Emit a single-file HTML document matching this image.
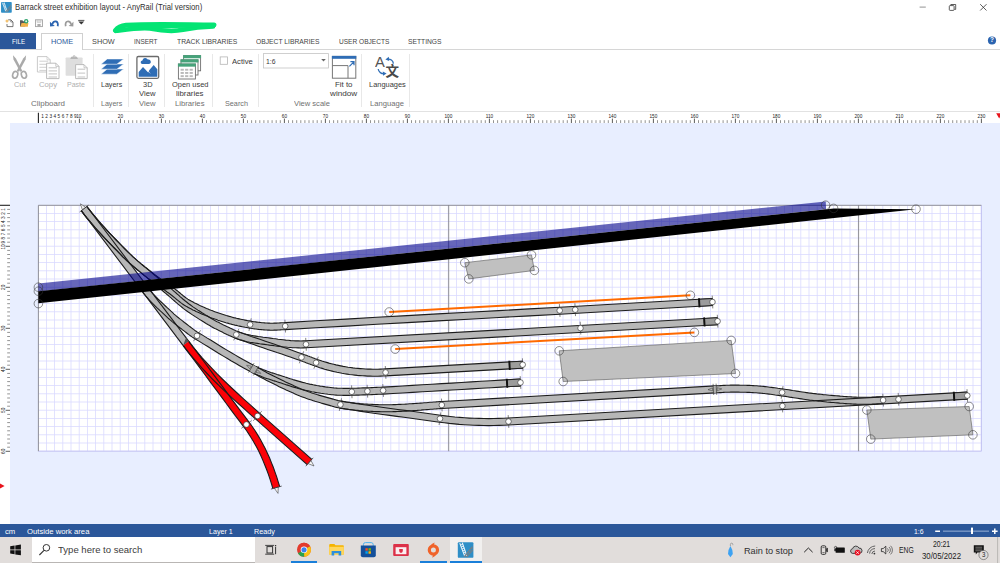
<!DOCTYPE html>
<html lang="en"><head><meta charset="utf-8"><title>Barrack street exhibition layout - AnyRail (Trial version)</title>
<style>
html,body{margin:0;padding:0}
body{width:1000px;height:563px;overflow:hidden;position:relative;background:#fff;font-family:"Liberation Sans",sans-serif;color:#333}
.t{position:absolute;white-space:nowrap;transform-origin:0 0;line-height:1;display:block}
.abs{position:absolute}
svg{position:absolute;left:0;top:0;overflow:visible}
#titlebar{position:absolute;left:0;top:0;width:1000px;height:32px;background:#fff}
#tabs{position:absolute;left:0;top:32px;width:1000px;height:17px;background:#fff;border-bottom:1px solid #d6d6d6}
#file{position:absolute;left:0;top:0.5px;width:36px;height:16.5px;background:#2b579a}
#hometab{position:absolute;left:41px;top:0.5px;width:40px;height:17px;background:#fff;border:1px solid #d0d0d0;border-bottom:1px solid #fff;box-sizing:content-box}
#ribbon{position:absolute;left:0;top:50px;width:1000px;height:61px;background:#fff;border-bottom:1px solid #e2e2e2}
.sep{position:absolute;top:54px;width:1px;height:53px;background:#e8e8e8}
#workspace{position:absolute;left:0;top:112px;width:1000px;height:412px;background:#fff}
#outside{position:absolute;left:10px;top:123px;width:990px;height:401px;background:#e8eeff}
#status{position:absolute;left:0;top:524px;width:1000px;height:13px;background:#2b579a}
#taskbar{position:absolute;left:0;top:537px;width:1000px;height:26px;background:#e1dddb}
#search{position:absolute;left:32px;top:0;width:223px;height:25px;background:#fff;border-bottom:1px solid #b9b6b4}
#active{position:absolute;left:450px;top:0;width:32px;height:26px;background:#f1f0ef}
.ul{position:absolute;top:24.3px;height:1.7px;background:#1a7fd9}
</style></head><body>
<div id="titlebar"></div>
<div id="tabs"><div id="file"></div><div id="hometab"></div></div>
<div id="ribbon"></div>
<div class="sep" style="left:92.5px"></div><div class="sep" style="left:128.3px"></div><div class="sep" style="left:164.2px"></div><div class="sep" style="left:212.4px"></div><div class="sep" style="left:258.3px"></div><div class="sep" style="left:361.3px"></div><div class="sep" style="left:408.8px"></div>
<div id="workspace"></div><div id="outside"></div>
<div id="status"></div>
<div id="taskbar"><div id="search"></div><div id="active"></div><div class="ul" style="left:291.3px;width:26.19999999999999px"></div><div class="ul" style="left:420px;width:27.19999999999999px"></div><div class="ul" style="left:450px;width:32px"></div></div>
<svg width="1000" height="563" viewBox="0 0 1000 563"><path d="M38.40,112.8 V123" stroke="#222" stroke-width="1.1"/><path d="M42.50,120.2 V123" stroke="#666" stroke-width="0.7"/><path d="M46.60,120.2 V123" stroke="#666" stroke-width="0.7"/><path d="M50.70,120.2 V123" stroke="#666" stroke-width="0.7"/><path d="M54.80,120.2 V123" stroke="#666" stroke-width="0.7"/><path d="M58.90,120.2 V123" stroke="#666" stroke-width="0.7"/><path d="M63.00,120.2 V123" stroke="#666" stroke-width="0.7"/><path d="M67.10,120.2 V123" stroke="#666" stroke-width="0.7"/><path d="M71.20,120.2 V123" stroke="#666" stroke-width="0.7"/><path d="M75.30,120.2 V123" stroke="#666" stroke-width="0.7"/><path d="M79.40,118.6 V123" stroke="#333" stroke-width="0.8"/><path d="M83.50,120.2 V123" stroke="#666" stroke-width="0.7"/><path d="M87.60,120.2 V123" stroke="#666" stroke-width="0.7"/><path d="M91.70,120.2 V123" stroke="#666" stroke-width="0.7"/><path d="M95.80,120.2 V123" stroke="#666" stroke-width="0.7"/><path d="M99.90,120.2 V123" stroke="#666" stroke-width="0.7"/><path d="M104.00,120.2 V123" stroke="#666" stroke-width="0.7"/><path d="M108.10,120.2 V123" stroke="#666" stroke-width="0.7"/><path d="M112.20,120.2 V123" stroke="#666" stroke-width="0.7"/><path d="M116.30,120.2 V123" stroke="#666" stroke-width="0.7"/><path d="M120.40,118.6 V123" stroke="#333" stroke-width="0.8"/><path d="M124.50,120.2 V123" stroke="#666" stroke-width="0.7"/><path d="M128.60,120.2 V123" stroke="#666" stroke-width="0.7"/><path d="M132.70,120.2 V123" stroke="#666" stroke-width="0.7"/><path d="M136.80,120.2 V123" stroke="#666" stroke-width="0.7"/><path d="M140.90,120.2 V123" stroke="#666" stroke-width="0.7"/><path d="M145.00,120.2 V123" stroke="#666" stroke-width="0.7"/><path d="M149.10,120.2 V123" stroke="#666" stroke-width="0.7"/><path d="M153.20,120.2 V123" stroke="#666" stroke-width="0.7"/><path d="M157.30,120.2 V123" stroke="#666" stroke-width="0.7"/><path d="M161.40,118.6 V123" stroke="#333" stroke-width="0.8"/><path d="M165.50,120.2 V123" stroke="#666" stroke-width="0.7"/><path d="M169.60,120.2 V123" stroke="#666" stroke-width="0.7"/><path d="M173.70,120.2 V123" stroke="#666" stroke-width="0.7"/><path d="M177.80,120.2 V123" stroke="#666" stroke-width="0.7"/><path d="M181.90,120.2 V123" stroke="#666" stroke-width="0.7"/><path d="M186.00,120.2 V123" stroke="#666" stroke-width="0.7"/><path d="M190.10,120.2 V123" stroke="#666" stroke-width="0.7"/><path d="M194.20,120.2 V123" stroke="#666" stroke-width="0.7"/><path d="M198.30,120.2 V123" stroke="#666" stroke-width="0.7"/><path d="M202.40,118.6 V123" stroke="#333" stroke-width="0.8"/><path d="M206.50,120.2 V123" stroke="#666" stroke-width="0.7"/><path d="M210.60,120.2 V123" stroke="#666" stroke-width="0.7"/><path d="M214.70,120.2 V123" stroke="#666" stroke-width="0.7"/><path d="M218.80,120.2 V123" stroke="#666" stroke-width="0.7"/><path d="M222.90,120.2 V123" stroke="#666" stroke-width="0.7"/><path d="M227.00,120.2 V123" stroke="#666" stroke-width="0.7"/><path d="M231.10,120.2 V123" stroke="#666" stroke-width="0.7"/><path d="M235.20,120.2 V123" stroke="#666" stroke-width="0.7"/><path d="M239.30,120.2 V123" stroke="#666" stroke-width="0.7"/><path d="M243.40,118.6 V123" stroke="#333" stroke-width="0.8"/><path d="M247.50,120.2 V123" stroke="#666" stroke-width="0.7"/><path d="M251.60,120.2 V123" stroke="#666" stroke-width="0.7"/><path d="M255.70,120.2 V123" stroke="#666" stroke-width="0.7"/><path d="M259.80,120.2 V123" stroke="#666" stroke-width="0.7"/><path d="M263.90,120.2 V123" stroke="#666" stroke-width="0.7"/><path d="M268.00,120.2 V123" stroke="#666" stroke-width="0.7"/><path d="M272.10,120.2 V123" stroke="#666" stroke-width="0.7"/><path d="M276.20,120.2 V123" stroke="#666" stroke-width="0.7"/><path d="M280.30,120.2 V123" stroke="#666" stroke-width="0.7"/><path d="M284.40,118.6 V123" stroke="#333" stroke-width="0.8"/><path d="M288.50,120.2 V123" stroke="#666" stroke-width="0.7"/><path d="M292.60,120.2 V123" stroke="#666" stroke-width="0.7"/><path d="M296.70,120.2 V123" stroke="#666" stroke-width="0.7"/><path d="M300.80,120.2 V123" stroke="#666" stroke-width="0.7"/><path d="M304.90,120.2 V123" stroke="#666" stroke-width="0.7"/><path d="M309.00,120.2 V123" stroke="#666" stroke-width="0.7"/><path d="M313.10,120.2 V123" stroke="#666" stroke-width="0.7"/><path d="M317.20,120.2 V123" stroke="#666" stroke-width="0.7"/><path d="M321.30,120.2 V123" stroke="#666" stroke-width="0.7"/><path d="M325.40,118.6 V123" stroke="#333" stroke-width="0.8"/><path d="M329.50,120.2 V123" stroke="#666" stroke-width="0.7"/><path d="M333.60,120.2 V123" stroke="#666" stroke-width="0.7"/><path d="M337.70,120.2 V123" stroke="#666" stroke-width="0.7"/><path d="M341.80,120.2 V123" stroke="#666" stroke-width="0.7"/><path d="M345.90,120.2 V123" stroke="#666" stroke-width="0.7"/><path d="M350.00,120.2 V123" stroke="#666" stroke-width="0.7"/><path d="M354.10,120.2 V123" stroke="#666" stroke-width="0.7"/><path d="M358.20,120.2 V123" stroke="#666" stroke-width="0.7"/><path d="M362.30,120.2 V123" stroke="#666" stroke-width="0.7"/><path d="M366.40,118.6 V123" stroke="#333" stroke-width="0.8"/><path d="M370.50,120.2 V123" stroke="#666" stroke-width="0.7"/><path d="M374.60,120.2 V123" stroke="#666" stroke-width="0.7"/><path d="M378.70,120.2 V123" stroke="#666" stroke-width="0.7"/><path d="M382.80,120.2 V123" stroke="#666" stroke-width="0.7"/><path d="M386.90,120.2 V123" stroke="#666" stroke-width="0.7"/><path d="M391.00,120.2 V123" stroke="#666" stroke-width="0.7"/><path d="M395.10,120.2 V123" stroke="#666" stroke-width="0.7"/><path d="M399.20,120.2 V123" stroke="#666" stroke-width="0.7"/><path d="M403.30,120.2 V123" stroke="#666" stroke-width="0.7"/><path d="M407.40,118.6 V123" stroke="#333" stroke-width="0.8"/><path d="M411.50,120.2 V123" stroke="#666" stroke-width="0.7"/><path d="M415.60,120.2 V123" stroke="#666" stroke-width="0.7"/><path d="M419.70,120.2 V123" stroke="#666" stroke-width="0.7"/><path d="M423.80,120.2 V123" stroke="#666" stroke-width="0.7"/><path d="M427.90,120.2 V123" stroke="#666" stroke-width="0.7"/><path d="M432.00,120.2 V123" stroke="#666" stroke-width="0.7"/><path d="M436.10,120.2 V123" stroke="#666" stroke-width="0.7"/><path d="M440.20,120.2 V123" stroke="#666" stroke-width="0.7"/><path d="M444.30,120.2 V123" stroke="#666" stroke-width="0.7"/><path d="M448.40,118.6 V123" stroke="#333" stroke-width="0.8"/><path d="M452.50,120.2 V123" stroke="#666" stroke-width="0.7"/><path d="M456.60,120.2 V123" stroke="#666" stroke-width="0.7"/><path d="M460.70,120.2 V123" stroke="#666" stroke-width="0.7"/><path d="M464.80,120.2 V123" stroke="#666" stroke-width="0.7"/><path d="M468.90,120.2 V123" stroke="#666" stroke-width="0.7"/><path d="M473.00,120.2 V123" stroke="#666" stroke-width="0.7"/><path d="M477.10,120.2 V123" stroke="#666" stroke-width="0.7"/><path d="M481.20,120.2 V123" stroke="#666" stroke-width="0.7"/><path d="M485.30,120.2 V123" stroke="#666" stroke-width="0.7"/><path d="M489.40,118.6 V123" stroke="#333" stroke-width="0.8"/><path d="M493.50,120.2 V123" stroke="#666" stroke-width="0.7"/><path d="M497.60,120.2 V123" stroke="#666" stroke-width="0.7"/><path d="M501.70,120.2 V123" stroke="#666" stroke-width="0.7"/><path d="M505.80,120.2 V123" stroke="#666" stroke-width="0.7"/><path d="M509.90,120.2 V123" stroke="#666" stroke-width="0.7"/><path d="M514.00,120.2 V123" stroke="#666" stroke-width="0.7"/><path d="M518.10,120.2 V123" stroke="#666" stroke-width="0.7"/><path d="M522.20,120.2 V123" stroke="#666" stroke-width="0.7"/><path d="M526.30,120.2 V123" stroke="#666" stroke-width="0.7"/><path d="M530.40,118.6 V123" stroke="#333" stroke-width="0.8"/><path d="M534.50,120.2 V123" stroke="#666" stroke-width="0.7"/><path d="M538.60,120.2 V123" stroke="#666" stroke-width="0.7"/><path d="M542.70,120.2 V123" stroke="#666" stroke-width="0.7"/><path d="M546.80,120.2 V123" stroke="#666" stroke-width="0.7"/><path d="M550.90,120.2 V123" stroke="#666" stroke-width="0.7"/><path d="M555.00,120.2 V123" stroke="#666" stroke-width="0.7"/><path d="M559.10,120.2 V123" stroke="#666" stroke-width="0.7"/><path d="M563.20,120.2 V123" stroke="#666" stroke-width="0.7"/><path d="M567.30,120.2 V123" stroke="#666" stroke-width="0.7"/><path d="M571.40,118.6 V123" stroke="#333" stroke-width="0.8"/><path d="M575.50,120.2 V123" stroke="#666" stroke-width="0.7"/><path d="M579.60,120.2 V123" stroke="#666" stroke-width="0.7"/><path d="M583.70,120.2 V123" stroke="#666" stroke-width="0.7"/><path d="M587.80,120.2 V123" stroke="#666" stroke-width="0.7"/><path d="M591.90,120.2 V123" stroke="#666" stroke-width="0.7"/><path d="M596.00,120.2 V123" stroke="#666" stroke-width="0.7"/><path d="M600.10,120.2 V123" stroke="#666" stroke-width="0.7"/><path d="M604.20,120.2 V123" stroke="#666" stroke-width="0.7"/><path d="M608.30,120.2 V123" stroke="#666" stroke-width="0.7"/><path d="M612.40,118.6 V123" stroke="#333" stroke-width="0.8"/><path d="M616.50,120.2 V123" stroke="#666" stroke-width="0.7"/><path d="M620.60,120.2 V123" stroke="#666" stroke-width="0.7"/><path d="M624.70,120.2 V123" stroke="#666" stroke-width="0.7"/><path d="M628.80,120.2 V123" stroke="#666" stroke-width="0.7"/><path d="M632.90,120.2 V123" stroke="#666" stroke-width="0.7"/><path d="M637.00,120.2 V123" stroke="#666" stroke-width="0.7"/><path d="M641.10,120.2 V123" stroke="#666" stroke-width="0.7"/><path d="M645.20,120.2 V123" stroke="#666" stroke-width="0.7"/><path d="M649.30,120.2 V123" stroke="#666" stroke-width="0.7"/><path d="M653.40,118.6 V123" stroke="#333" stroke-width="0.8"/><path d="M657.50,120.2 V123" stroke="#666" stroke-width="0.7"/><path d="M661.60,120.2 V123" stroke="#666" stroke-width="0.7"/><path d="M665.70,120.2 V123" stroke="#666" stroke-width="0.7"/><path d="M669.80,120.2 V123" stroke="#666" stroke-width="0.7"/><path d="M673.90,120.2 V123" stroke="#666" stroke-width="0.7"/><path d="M678.00,120.2 V123" stroke="#666" stroke-width="0.7"/><path d="M682.10,120.2 V123" stroke="#666" stroke-width="0.7"/><path d="M686.20,120.2 V123" stroke="#666" stroke-width="0.7"/><path d="M690.30,120.2 V123" stroke="#666" stroke-width="0.7"/><path d="M694.40,118.6 V123" stroke="#333" stroke-width="0.8"/><path d="M698.50,120.2 V123" stroke="#666" stroke-width="0.7"/><path d="M702.60,120.2 V123" stroke="#666" stroke-width="0.7"/><path d="M706.70,120.2 V123" stroke="#666" stroke-width="0.7"/><path d="M710.80,120.2 V123" stroke="#666" stroke-width="0.7"/><path d="M714.90,120.2 V123" stroke="#666" stroke-width="0.7"/><path d="M719.00,120.2 V123" stroke="#666" stroke-width="0.7"/><path d="M723.10,120.2 V123" stroke="#666" stroke-width="0.7"/><path d="M727.20,120.2 V123" stroke="#666" stroke-width="0.7"/><path d="M731.30,120.2 V123" stroke="#666" stroke-width="0.7"/><path d="M735.40,118.6 V123" stroke="#333" stroke-width="0.8"/><path d="M739.50,120.2 V123" stroke="#666" stroke-width="0.7"/><path d="M743.60,120.2 V123" stroke="#666" stroke-width="0.7"/><path d="M747.70,120.2 V123" stroke="#666" stroke-width="0.7"/><path d="M751.80,120.2 V123" stroke="#666" stroke-width="0.7"/><path d="M755.90,120.2 V123" stroke="#666" stroke-width="0.7"/><path d="M760.00,120.2 V123" stroke="#666" stroke-width="0.7"/><path d="M764.10,120.2 V123" stroke="#666" stroke-width="0.7"/><path d="M768.20,120.2 V123" stroke="#666" stroke-width="0.7"/><path d="M772.30,120.2 V123" stroke="#666" stroke-width="0.7"/><path d="M776.40,118.6 V123" stroke="#333" stroke-width="0.8"/><path d="M780.50,120.2 V123" stroke="#666" stroke-width="0.7"/><path d="M784.60,120.2 V123" stroke="#666" stroke-width="0.7"/><path d="M788.70,120.2 V123" stroke="#666" stroke-width="0.7"/><path d="M792.80,120.2 V123" stroke="#666" stroke-width="0.7"/><path d="M796.90,120.2 V123" stroke="#666" stroke-width="0.7"/><path d="M801.00,120.2 V123" stroke="#666" stroke-width="0.7"/><path d="M805.10,120.2 V123" stroke="#666" stroke-width="0.7"/><path d="M809.20,120.2 V123" stroke="#666" stroke-width="0.7"/><path d="M813.30,120.2 V123" stroke="#666" stroke-width="0.7"/><path d="M817.40,118.6 V123" stroke="#333" stroke-width="0.8"/><path d="M821.50,120.2 V123" stroke="#666" stroke-width="0.7"/><path d="M825.60,120.2 V123" stroke="#666" stroke-width="0.7"/><path d="M829.70,120.2 V123" stroke="#666" stroke-width="0.7"/><path d="M833.80,120.2 V123" stroke="#666" stroke-width="0.7"/><path d="M837.90,120.2 V123" stroke="#666" stroke-width="0.7"/><path d="M842.00,120.2 V123" stroke="#666" stroke-width="0.7"/><path d="M846.10,120.2 V123" stroke="#666" stroke-width="0.7"/><path d="M850.20,120.2 V123" stroke="#666" stroke-width="0.7"/><path d="M854.30,120.2 V123" stroke="#666" stroke-width="0.7"/><path d="M858.40,118.6 V123" stroke="#333" stroke-width="0.8"/><path d="M862.50,120.2 V123" stroke="#666" stroke-width="0.7"/><path d="M866.60,120.2 V123" stroke="#666" stroke-width="0.7"/><path d="M870.70,120.2 V123" stroke="#666" stroke-width="0.7"/><path d="M874.80,120.2 V123" stroke="#666" stroke-width="0.7"/><path d="M878.90,120.2 V123" stroke="#666" stroke-width="0.7"/><path d="M883.00,120.2 V123" stroke="#666" stroke-width="0.7"/><path d="M887.10,120.2 V123" stroke="#666" stroke-width="0.7"/><path d="M891.20,120.2 V123" stroke="#666" stroke-width="0.7"/><path d="M895.30,120.2 V123" stroke="#666" stroke-width="0.7"/><path d="M899.40,118.6 V123" stroke="#333" stroke-width="0.8"/><path d="M903.50,120.2 V123" stroke="#666" stroke-width="0.7"/><path d="M907.60,120.2 V123" stroke="#666" stroke-width="0.7"/><path d="M911.70,120.2 V123" stroke="#666" stroke-width="0.7"/><path d="M915.80,120.2 V123" stroke="#666" stroke-width="0.7"/><path d="M919.90,120.2 V123" stroke="#666" stroke-width="0.7"/><path d="M924.00,120.2 V123" stroke="#666" stroke-width="0.7"/><path d="M928.10,120.2 V123" stroke="#666" stroke-width="0.7"/><path d="M932.20,120.2 V123" stroke="#666" stroke-width="0.7"/><path d="M936.30,120.2 V123" stroke="#666" stroke-width="0.7"/><path d="M940.40,118.6 V123" stroke="#333" stroke-width="0.8"/><path d="M944.50,120.2 V123" stroke="#666" stroke-width="0.7"/><path d="M948.60,120.2 V123" stroke="#666" stroke-width="0.7"/><path d="M952.70,120.2 V123" stroke="#666" stroke-width="0.7"/><path d="M956.80,120.2 V123" stroke="#666" stroke-width="0.7"/><path d="M960.90,120.2 V123" stroke="#666" stroke-width="0.7"/><path d="M965.00,120.2 V123" stroke="#666" stroke-width="0.7"/><path d="M969.10,120.2 V123" stroke="#666" stroke-width="0.7"/><path d="M973.20,120.2 V123" stroke="#666" stroke-width="0.7"/><path d="M977.30,120.2 V123" stroke="#666" stroke-width="0.7"/><path d="M981.40,118.6 V123" stroke="#333" stroke-width="0.8"/><path d="M0,205.30 H10" stroke="#222" stroke-width="1.1"/><path d="M7.2,209.40 H10" stroke="#666" stroke-width="0.7"/><path d="M7.2,213.50 H10" stroke="#666" stroke-width="0.7"/><path d="M7.2,217.60 H10" stroke="#666" stroke-width="0.7"/><path d="M7.2,221.70 H10" stroke="#666" stroke-width="0.7"/><path d="M7.2,225.80 H10" stroke="#666" stroke-width="0.7"/><path d="M7.2,229.90 H10" stroke="#666" stroke-width="0.7"/><path d="M7.2,234.00 H10" stroke="#666" stroke-width="0.7"/><path d="M7.2,238.10 H10" stroke="#666" stroke-width="0.7"/><path d="M7.2,242.20 H10" stroke="#666" stroke-width="0.7"/><path d="M5.6,246.30 H10" stroke="#333" stroke-width="0.8"/><path d="M7.2,250.40 H10" stroke="#666" stroke-width="0.7"/><path d="M7.2,254.50 H10" stroke="#666" stroke-width="0.7"/><path d="M7.2,258.60 H10" stroke="#666" stroke-width="0.7"/><path d="M7.2,262.70 H10" stroke="#666" stroke-width="0.7"/><path d="M7.2,266.80 H10" stroke="#666" stroke-width="0.7"/><path d="M7.2,270.90 H10" stroke="#666" stroke-width="0.7"/><path d="M7.2,275.00 H10" stroke="#666" stroke-width="0.7"/><path d="M7.2,279.10 H10" stroke="#666" stroke-width="0.7"/><path d="M7.2,283.20 H10" stroke="#666" stroke-width="0.7"/><path d="M5.6,287.30 H10" stroke="#333" stroke-width="0.8"/><path d="M7.2,291.40 H10" stroke="#666" stroke-width="0.7"/><path d="M7.2,295.50 H10" stroke="#666" stroke-width="0.7"/><path d="M7.2,299.60 H10" stroke="#666" stroke-width="0.7"/><path d="M7.2,303.70 H10" stroke="#666" stroke-width="0.7"/><path d="M7.2,307.80 H10" stroke="#666" stroke-width="0.7"/><path d="M7.2,311.90 H10" stroke="#666" stroke-width="0.7"/><path d="M7.2,316.00 H10" stroke="#666" stroke-width="0.7"/><path d="M7.2,320.10 H10" stroke="#666" stroke-width="0.7"/><path d="M7.2,324.20 H10" stroke="#666" stroke-width="0.7"/><path d="M5.6,328.30 H10" stroke="#333" stroke-width="0.8"/><path d="M7.2,332.40 H10" stroke="#666" stroke-width="0.7"/><path d="M7.2,336.50 H10" stroke="#666" stroke-width="0.7"/><path d="M7.2,340.60 H10" stroke="#666" stroke-width="0.7"/><path d="M7.2,344.70 H10" stroke="#666" stroke-width="0.7"/><path d="M7.2,348.80 H10" stroke="#666" stroke-width="0.7"/><path d="M7.2,352.90 H10" stroke="#666" stroke-width="0.7"/><path d="M7.2,357.00 H10" stroke="#666" stroke-width="0.7"/><path d="M7.2,361.10 H10" stroke="#666" stroke-width="0.7"/><path d="M7.2,365.20 H10" stroke="#666" stroke-width="0.7"/><path d="M5.6,369.30 H10" stroke="#333" stroke-width="0.8"/><path d="M7.2,373.40 H10" stroke="#666" stroke-width="0.7"/><path d="M7.2,377.50 H10" stroke="#666" stroke-width="0.7"/><path d="M7.2,381.60 H10" stroke="#666" stroke-width="0.7"/><path d="M7.2,385.70 H10" stroke="#666" stroke-width="0.7"/><path d="M7.2,389.80 H10" stroke="#666" stroke-width="0.7"/><path d="M7.2,393.90 H10" stroke="#666" stroke-width="0.7"/><path d="M7.2,398.00 H10" stroke="#666" stroke-width="0.7"/><path d="M7.2,402.10 H10" stroke="#666" stroke-width="0.7"/><path d="M7.2,406.20 H10" stroke="#666" stroke-width="0.7"/><path d="M5.6,410.30 H10" stroke="#333" stroke-width="0.8"/><path d="M7.2,414.40 H10" stroke="#666" stroke-width="0.7"/><path d="M7.2,418.50 H10" stroke="#666" stroke-width="0.7"/><path d="M7.2,422.60 H10" stroke="#666" stroke-width="0.7"/><path d="M7.2,426.70 H10" stroke="#666" stroke-width="0.7"/><path d="M7.2,430.80 H10" stroke="#666" stroke-width="0.7"/><path d="M7.2,434.90 H10" stroke="#666" stroke-width="0.7"/><path d="M7.2,439.00 H10" stroke="#666" stroke-width="0.7"/><path d="M7.2,443.10 H10" stroke="#666" stroke-width="0.7"/><path d="M7.2,447.20 H10" stroke="#666" stroke-width="0.7"/><path d="M5.6,451.30 H10" stroke="#333" stroke-width="0.8"/>
<g font-family="Liberation Sans, sans-serif" font-size="4.7" fill="#222"><text x="42.50" y="117.7" text-anchor="middle">1</text><text x="46.60" y="117.7" text-anchor="middle">2</text><text x="50.70" y="117.7" text-anchor="middle">3</text><text x="54.80" y="117.7" text-anchor="middle">4</text><text x="58.90" y="117.7" text-anchor="middle">5</text><text x="63.00" y="117.7" text-anchor="middle">6</text><text x="67.10" y="117.7" text-anchor="middle">7</text><text x="71.20" y="117.7" text-anchor="middle">8</text><text x="75.30" y="117.7" text-anchor="middle">9</text><text x="78.80" y="117.7" text-anchor="middle">10</text><text x="120.40" y="117.7" text-anchor="middle">20</text><text x="161.40" y="117.7" text-anchor="middle">30</text><text x="202.40" y="117.7" text-anchor="middle">40</text><text x="243.40" y="117.7" text-anchor="middle">50</text><text x="284.40" y="117.7" text-anchor="middle">60</text><text x="325.40" y="117.7" text-anchor="middle">70</text><text x="366.40" y="117.7" text-anchor="middle">80</text><text x="407.40" y="117.7" text-anchor="middle">90</text><text x="448.40" y="117.7" text-anchor="middle">100</text><text x="489.40" y="117.7" text-anchor="middle">110</text><text x="530.40" y="117.7" text-anchor="middle">120</text><text x="571.40" y="117.7" text-anchor="middle">130</text><text x="612.40" y="117.7" text-anchor="middle">140</text><text x="653.40" y="117.7" text-anchor="middle">150</text><text x="694.40" y="117.7" text-anchor="middle">160</text><text x="735.40" y="117.7" text-anchor="middle">170</text><text x="776.40" y="117.7" text-anchor="middle">180</text><text x="817.40" y="117.7" text-anchor="middle">190</text><text x="858.40" y="117.7" text-anchor="middle">200</text><text x="899.40" y="117.7" text-anchor="middle">210</text><text x="940.40" y="117.7" text-anchor="middle">220</text><text x="981.40" y="117.7" text-anchor="middle">230</text><text transform="translate(4.6,209.40) rotate(-90)" text-anchor="middle">1</text><text transform="translate(4.6,213.50) rotate(-90)" text-anchor="middle">2</text><text transform="translate(4.6,217.60) rotate(-90)" text-anchor="middle">3</text><text transform="translate(4.6,221.70) rotate(-90)" text-anchor="middle">4</text><text transform="translate(4.6,225.80) rotate(-90)" text-anchor="middle">5</text><text transform="translate(4.6,229.90) rotate(-90)" text-anchor="middle">6</text><text transform="translate(4.6,234.00) rotate(-90)" text-anchor="middle">7</text><text transform="translate(4.6,238.10) rotate(-90)" text-anchor="middle">8</text><text transform="translate(4.6,242.20) rotate(-90)" text-anchor="middle">9</text><text transform="translate(4.6,246.90) rotate(-90)" text-anchor="middle">10</text><text transform="translate(4.6,287.30) rotate(-90)" text-anchor="middle">20</text><text transform="translate(4.6,328.30) rotate(-90)" text-anchor="middle">30</text><text transform="translate(4.6,369.30) rotate(-90)" text-anchor="middle">40</text><text transform="translate(4.6,410.30) rotate(-90)" text-anchor="middle">50</text><text transform="translate(4.6,451.30) rotate(-90)" text-anchor="middle">60</text></g>
<path d="M996.2,113.2 h6 l-3,5.2z" fill="#e8141c"/>
<path d="M0,483.4 l4.6,2.6 l-4.6,2.6z" fill="#e8141c"/>
<defs><pattern id="grid" x="34.1" y="201.1" width="8.2" height="8.2" patternUnits="userSpaceOnUse"><path d="M4.1,0 V8.2 M0,4.1 H8.2" stroke="#d9d9ff" stroke-width="0.8" fill="none"/></pattern></defs>
<rect x="38.4" y="205.3" width="943.0" height="245.9" fill="#fff"/>
<rect x="38.4" y="205.3" width="943.0" height="245.9" fill="url(#grid)"/>
<path d="M981.4,205.3 V451.2 H38.4" fill="none" stroke="#c2c2f2" stroke-width="1"/>
<path d="M38.4,451.2 V205.3 H981.4" fill="none" stroke="#85858c" stroke-width="0.9"/>
<path d="M448.7,205.3 V451.2 M858.6,205.3 V451.2" stroke="#777" stroke-width="0.8"/>
<polygon points="81.3,210.7 183.2,345.6 188.8,341.4 86.9,206.5" fill="#b7b7b7"/><polygon points="81.3,210.7 84.0,214.3 86.8,217.8 89.6,221.2 92.5,224.6 95.5,228.0 98.5,231.3 101.5,234.6 104.5,237.9 107.6,241.1 110.7,244.4 113.8,247.6 116.9,250.7 120.0,253.9 123.1,257.1 124.8,258.7 126.5,260.3 128.2,261.9 129.9,263.5 131.6,265.0 133.4,266.5 135.2,268.0 137.0,269.5 138.8,270.9 140.6,272.4 142.3,273.8 144.1,275.2 145.9,276.6 147.7,278.1 149.4,279.3 151.0,280.5 152.6,281.8 154.3,283.0 155.9,284.1 157.6,285.3 159.2,286.5 160.9,287.6 162.5,288.8 164.2,289.9 165.8,291.0 167.4,292.2 169.0,293.3 170.6,294.5 171.6,295.3 172.6,296.0 173.5,296.8 174.5,297.6 175.5,298.4 176.5,299.3 177.5,300.1 178.5,300.9 179.6,301.8 180.6,302.6 181.7,303.4 182.9,304.2 184.0,305.0 185.2,305.7 186.7,306.6 188.2,307.4 189.8,308.3 191.3,309.1 192.8,309.9 194.4,310.6 196.0,311.4 197.5,312.1 199.1,312.8 200.7,313.5 202.2,314.2 203.8,314.8 205.4,315.5 207.0,316.1 208.5,316.8 210.1,317.4 211.6,318.0 213.2,318.5 214.8,319.1 216.4,319.6 217.9,320.2 219.5,320.7 221.1,321.2 222.7,321.7 224.3,322.2 225.9,322.7 227.5,323.1 229.1,323.6 230.5,324.0 232.0,324.4 233.4,324.7 234.9,325.1 236.3,325.4 237.8,325.8 239.2,326.1 240.7,326.4 242.2,326.7 243.6,327.0 245.1,327.3 246.6,327.5 248.0,327.8 249.5,328.1 250.8,328.3 252.1,328.5 253.4,328.7 254.7,328.9 256.0,329.0 257.3,329.2 258.6,329.4 259.9,329.5 261.2,329.6 262.6,329.8 263.9,329.9 265.2,330.0 266.5,330.0 267.9,330.1 269.1,330.1 270.4,330.2 271.7,330.2 273.0,330.2 274.2,330.1 275.5,330.1 276.7,330.1 278.0,330.0 279.2,330.0 280.5,329.9 281.7,329.8 283.0,329.7 284.2,329.7 285.4,329.6 315.9,327.8 346.4,326.1 377.0,324.3 407.5,322.6 438.0,320.9 468.5,319.2 499.0,317.5 529.6,315.9 560.1,314.2 590.6,312.5 621.1,310.8 651.7,309.0 682.2,307.3 712.7,305.5 712.3,298.5 681.8,300.3 651.3,302.0 620.7,303.8 590.2,305.5 559.7,307.2 529.2,308.9 498.7,310.6 468.1,312.2 437.6,313.9 407.1,315.6 376.6,317.3 346.0,319.1 315.5,320.8 285.0,322.6 283.8,322.7 282.5,322.8 281.3,322.8 280.1,322.9 278.9,323.0 277.7,323.0 276.5,323.1 275.3,323.1 274.1,323.1 272.9,323.2 271.7,323.2 270.5,323.2 269.3,323.1 268.1,323.1 266.9,323.0 265.7,323.0 264.4,322.9 263.2,322.8 261.9,322.7 260.7,322.5 259.4,322.4 258.2,322.3 256.9,322.1 255.7,321.9 254.4,321.7 253.2,321.6 251.9,321.4 250.7,321.1 249.3,320.9 247.8,320.7 246.4,320.4 245.0,320.1 243.6,319.8 242.1,319.5 240.7,319.2 239.3,318.9 237.9,318.6 236.5,318.3 235.1,317.9 233.7,317.6 232.3,317.2 230.9,316.8 229.4,316.4 227.8,315.9 226.3,315.5 224.8,315.0 223.2,314.5 221.7,314.0 220.2,313.5 218.6,313.0 217.1,312.5 215.6,312.0 214.1,311.4 212.6,310.8 211.1,310.3 209.6,309.7 208.1,309.0 206.5,308.4 205.0,307.7 203.5,307.1 202.0,306.4 200.4,305.7 198.9,305.0 197.5,304.3 196.0,303.6 194.5,302.9 193.1,302.1 191.6,301.3 190.2,300.5 188.8,299.7 187.8,299.1 186.8,298.4 185.8,297.7 184.9,297.0 183.9,296.3 182.9,295.5 182.0,294.7 181.0,293.9 180.0,293.0 179.0,292.2 178.0,291.4 176.9,290.5 175.9,289.7 174.8,288.9 173.1,287.7 171.5,286.5 169.8,285.3 168.2,284.2 166.5,283.0 164.9,281.9 163.2,280.7 161.6,279.6 160.0,278.4 158.4,277.3 156.8,276.1 155.2,274.9 153.6,273.8 152.1,272.5 150.3,271.1 148.5,269.7 146.7,268.3 144.9,266.9 143.2,265.5 141.4,264.1 139.7,262.6 137.9,261.2 136.2,259.7 134.6,258.2 132.9,256.8 131.3,255.2 129.7,253.7 128.1,252.1 125.0,249.0 121.9,245.8 118.8,242.7 115.7,239.5 112.7,236.3 109.6,233.1 106.6,229.9 103.7,226.7 100.7,223.4 97.9,220.1 95.0,216.7 92.2,213.4 89.5,209.9 86.8,206.5" fill="#b7b7b7"/><polygon points="81.3,210.7 84.0,214.3 86.8,217.8 89.7,221.2 92.6,224.6 95.5,228.0 98.5,231.3 101.5,234.6 104.5,237.9 107.6,241.1 110.7,244.3 113.8,247.5 116.9,250.7 120.0,253.9 123.1,257.1 124.8,258.7 126.5,260.3 128.2,261.9 129.9,263.5 131.6,265.0 133.4,266.5 135.2,268.0 136.9,269.5 138.7,270.9 140.5,272.4 142.2,273.8 144.0,275.3 145.7,276.7 147.4,278.2 148.8,279.4 150.2,280.5 151.6,281.7 153.0,282.9 154.4,284.0 155.9,285.2 157.3,286.4 158.7,287.5 160.1,288.7 161.5,289.8 162.9,291.0 164.3,292.2 165.7,293.3 167.0,294.5 168.3,295.5 169.5,296.6 170.8,297.7 172.0,298.8 173.2,299.9 174.5,301.0 175.7,302.1 177.0,303.2 178.3,304.3 179.6,305.4 180.9,306.4 182.2,307.5 183.5,308.6 184.9,309.6 186.4,310.7 187.9,311.8 189.4,312.8 191.0,313.9 192.5,314.9 194.1,315.9 195.6,316.9 197.2,317.9 198.7,318.9 200.3,319.9 201.8,320.8 203.4,321.8 204.9,322.7 206.5,323.7 207.4,324.2 208.3,324.8 209.2,325.3 210.1,325.8 211.1,326.4 212.0,326.9 212.9,327.4 213.8,327.9 214.8,328.4 215.7,328.8 216.6,329.3 217.6,329.8 218.5,330.3 219.4,330.7 220.5,331.3 221.6,331.8 222.7,332.3 223.7,332.9 224.8,333.4 225.9,333.9 227.0,334.5 228.1,335.0 229.2,335.5 230.4,336.0 231.5,336.5 232.6,337.0 233.7,337.5 234.9,338.0 237.3,338.9 239.8,339.7 242.2,340.4 244.7,341.1 247.2,341.7 249.7,342.2 252.2,342.6 254.7,343.0 257.2,343.4 259.7,343.8 262.2,344.1 264.6,344.4 267.1,344.7 269.5,345.1 272.1,345.4 274.6,345.8 277.2,346.1 279.8,346.4 282.4,346.8 285.0,347.0 287.6,347.3 290.3,347.5 292.9,347.7 295.6,347.8 298.2,347.9 300.9,348.0 303.5,347.9 306.2,347.8 717.8,324.7 717.4,317.7 305.8,340.8 303.3,340.9 300.8,341.0 298.3,340.9 295.8,340.9 293.3,340.7 290.8,340.6 288.3,340.3 285.8,340.1 283.2,339.8 280.7,339.5 278.1,339.2 275.6,338.8 273.0,338.5 270.5,338.1 268.0,337.8 265.6,337.5 263.1,337.2 260.7,336.8 258.2,336.5 255.8,336.1 253.4,335.7 251.1,335.3 248.7,334.8 246.4,334.3 244.1,333.7 241.9,333.0 239.7,332.3 237.5,331.4 236.4,331.0 235.4,330.6 234.3,330.1 233.2,329.6 232.2,329.1 231.1,328.6 230.0,328.1 229.0,327.6 227.9,327.1 226.8,326.6 225.8,326.1 224.7,325.5 223.6,325.0 222.6,324.5 221.7,324.0 220.7,323.5 219.8,323.1 218.9,322.6 218.0,322.1 217.1,321.7 216.2,321.2 215.3,320.7 214.5,320.2 213.6,319.7 212.7,319.2 211.8,318.7 211.0,318.2 210.1,317.7 208.6,316.8 207.0,315.8 205.5,314.9 204.0,313.9 202.4,313.0 200.9,312.0 199.4,311.0 197.9,310.1 196.4,309.1 194.9,308.1 193.4,307.1 192.0,306.1 190.5,305.0 189.1,304.0 187.8,303.0 186.6,302.0 185.3,301.0 184.1,300.0 182.8,299.0 181.6,297.9 180.3,296.8 179.1,295.7 177.9,294.6 176.6,293.5 175.4,292.4 174.1,291.3 172.8,290.2 171.6,289.1 170.1,287.9 168.7,286.8 167.3,285.6 165.9,284.4 164.5,283.3 163.1,282.1 161.7,281.0 160.3,279.8 158.9,278.7 157.5,277.5 156.1,276.3 154.7,275.2 153.3,274.0 152.0,272.8 150.2,271.3 148.4,269.9 146.7,268.4 144.9,267.0 143.1,265.5 141.4,264.1 139.7,262.6 137.9,261.2 136.2,259.7 134.5,258.2 132.9,256.7 131.3,255.2 129.7,253.7 128.1,252.1 125.0,249.0 121.9,245.8 118.8,242.7 115.7,239.5 112.7,236.3 109.6,233.1 106.6,229.9 103.7,226.6 100.7,223.4 97.9,220.1 95.0,216.7 92.2,213.4 89.5,209.9 86.8,206.5" fill="#b7b7b7"/><polygon points="235.0,338.0 239.7,339.7 244.3,341.3 249.0,343.0 253.7,344.6 258.3,346.2 263.0,347.8 267.7,349.4 272.4,351.0 277.0,352.6 281.7,354.1 286.4,355.7 291.0,357.3 295.7,359.0 300.3,360.6 301.4,361.0 302.4,361.3 303.4,361.7 304.5,362.1 305.5,362.5 306.5,362.9 307.6,363.3 308.6,363.7 309.7,364.0 310.7,364.4 311.7,364.8 312.8,365.2 313.8,365.6 314.9,366.0 317.3,366.8 319.7,367.7 322.2,368.4 324.6,369.2 327.1,369.9 329.5,370.5 332.0,371.1 334.5,371.7 337.0,372.3 339.5,372.8 342.0,373.3 344.5,373.7 347.0,374.1 349.5,374.5 352.1,374.8 354.7,375.1 357.3,375.4 359.8,375.6 362.4,375.8 365.0,375.9 367.6,376.1 370.2,376.1 372.8,376.2 375.4,376.2 378.0,376.2 380.6,376.1 383.2,376.0 385.8,375.9 522.9,368.2 522.5,361.2 385.4,368.9 382.9,369.0 380.4,369.1 377.9,369.2 375.4,369.2 372.9,369.2 370.4,369.1 367.9,369.1 365.4,369.0 362.9,368.8 360.4,368.6 357.9,368.4 355.4,368.2 353.0,367.9 350.5,367.5 348.1,367.2 345.6,366.8 343.2,366.4 340.8,365.9 338.4,365.4 336.0,364.9 333.7,364.3 331.3,363.7 328.9,363.1 326.6,362.4 324.2,361.7 321.9,361.0 319.6,360.2 317.3,359.4 316.3,359.0 315.2,358.7 314.2,358.3 313.2,357.9 312.1,357.5 311.1,357.1 310.0,356.7 309.0,356.3 307.9,355.9 306.9,355.5 305.8,355.1 304.8,354.8 303.7,354.4 302.7,354.0 298.0,352.4 293.3,350.7 288.7,349.1 284.0,347.5 279.3,345.9 274.6,344.3 270.0,342.8 265.3,341.2 260.6,339.6 256.0,338.0 251.3,336.4 246.7,334.7 242.0,333.1 237.4,331.4" fill="#b7b7b7"/><polygon points="142.6,292.2 144.2,294.2 145.9,296.2 147.7,298.2 149.4,300.2 151.3,302.1 153.1,303.9 155.0,305.8 156.8,307.6 158.7,309.3 160.6,311.1 162.5,312.8 164.4,314.6 166.2,316.3 168.1,318.1 169.1,319.0 170.1,319.8 171.1,320.7 172.1,321.6 173.1,322.4 174.1,323.2 175.1,324.1 176.2,324.9 177.2,325.7 178.2,326.5 179.2,327.2 180.2,328.0 181.3,328.8 182.3,329.6 183.1,330.3 184.0,330.9 184.9,331.6 185.8,332.3 186.7,333.0 187.6,333.7 188.5,334.4 189.5,335.1 190.4,335.8 191.3,336.4 192.3,337.1 193.3,337.7 194.3,338.4 195.3,339.0 199.3,341.4 203.3,343.9 207.3,346.3 211.3,348.8 215.3,351.2 219.3,353.7 223.3,356.1 227.4,358.5 231.4,361.0 235.5,363.3 239.6,365.7 243.7,368.0 247.9,370.2 252.1,372.4 254.1,373.4 256.2,374.4 258.3,375.3 260.4,376.1 262.4,376.9 264.5,377.7 266.6,378.4 268.7,379.1 270.8,379.8 272.9,380.5 275.0,381.1 277.1,381.8 279.1,382.4 281.2,383.1 283.0,383.7 284.7,384.3 286.5,384.9 288.3,385.4 290.1,386.0 291.9,386.6 293.7,387.1 295.5,387.6 297.3,388.2 299.1,388.7 300.9,389.2 302.7,389.6 304.6,390.1 306.4,390.5 308.2,390.9 310.0,391.3 311.8,391.7 313.6,392.0 315.4,392.4 317.2,392.7 319.0,393.0 320.8,393.3 322.6,393.5 324.5,393.8 326.3,394.0 328.1,394.3 329.9,394.5 331.7,394.7 333.2,394.8 334.6,395.0 336.1,395.1 337.5,395.2 339.0,395.2 340.4,395.3 341.8,395.3 343.3,395.4 344.7,395.4 346.2,395.4 347.6,395.4 349.0,395.4 350.5,395.3 351.9,395.3 354.1,395.2 356.4,395.1 358.6,395.1 360.8,395.0 363.1,394.9 365.3,394.9 367.5,394.8 369.8,394.7 372.0,394.6 374.2,394.5 376.5,394.4 378.7,394.3 381.0,394.2 383.2,394.1 393.0,393.5 402.8,393.0 412.7,392.4 422.5,391.8 432.3,391.2 442.1,390.6 452.0,390.0 461.8,389.5 471.6,388.9 481.4,388.3 491.2,387.7 501.1,387.1 510.9,386.5 520.7,386.0 520.3,379.0 510.5,379.6 500.7,380.1 490.8,380.7 481.0,381.3 471.2,381.9 461.4,382.5 451.5,383.1 441.7,383.6 431.9,384.2 422.1,384.8 412.3,385.4 402.4,386.0 392.6,386.6 382.8,387.1 380.6,387.2 378.4,387.3 376.2,387.4 373.9,387.5 371.7,387.6 369.5,387.7 367.3,387.8 365.1,387.9 362.8,387.9 360.6,388.0 358.4,388.1 356.1,388.2 353.9,388.2 351.7,388.3 350.3,388.3 348.9,388.4 347.5,388.4 346.2,388.4 344.8,388.4 343.4,388.4 342.0,388.3 340.7,388.3 339.3,388.2 337.9,388.2 336.6,388.1 335.2,388.0 333.8,387.9 332.5,387.7 330.7,387.5 328.9,387.3 327.2,387.1 325.4,386.9 323.7,386.6 321.9,386.3 320.2,386.1 318.4,385.8 316.7,385.5 314.9,385.1 313.2,384.8 311.4,384.4 309.7,384.1 308.0,383.7 306.2,383.3 304.5,382.8 302.7,382.4 300.9,381.9 299.2,381.4 297.4,380.9 295.7,380.4 293.9,379.9 292.2,379.3 290.4,378.8 288.7,378.2 286.9,377.6 285.2,377.1 283.4,376.5 281.3,375.8 279.2,375.1 277.1,374.5 275.1,373.8 273.0,373.1 270.9,372.5 268.9,371.8 266.9,371.1 264.9,370.3 262.9,369.6 261.0,368.8 259.0,368.0 257.2,367.1 255.3,366.2 251.2,364.0 247.1,361.8 243.0,359.6 239.0,357.3 235.0,354.9 231.0,352.5 226.9,350.1 222.9,347.7 218.9,345.3 215.0,342.8 211.0,340.3 206.9,337.9 202.9,335.4 198.9,333.0 198.0,332.4 197.1,331.9 196.2,331.3 195.3,330.7 194.5,330.1 193.6,329.4 192.7,328.8 191.8,328.1 191.0,327.5 190.1,326.8 189.2,326.1 188.3,325.4 187.4,324.7 186.5,324.0 185.5,323.2 184.5,322.5 183.5,321.7 182.5,320.9 181.5,320.1 180.5,319.4 179.5,318.6 178.5,317.8 177.5,317.0 176.6,316.2 175.6,315.4 174.7,314.6 173.8,313.8 172.9,312.9 171.0,311.2 169.1,309.4 167.2,307.7 165.4,306.0 163.5,304.2 161.7,302.5 159.8,300.7 158.0,299.0 156.3,297.2 154.6,295.4 152.9,293.6 151.3,291.7 149.7,289.8 148.2,287.8" fill="#b7b7b7"/><polygon points="251.9,372.3 253.9,373.5 256.0,374.6 258.0,375.8 260.1,376.9 262.1,378.0 264.2,379.1 266.2,380.2 268.3,381.2 270.4,382.3 272.5,383.3 274.5,384.3 276.6,385.3 278.7,386.4 280.8,387.4 282.5,388.2 284.3,389.0 286.1,389.9 287.9,390.7 289.6,391.5 291.4,392.3 293.2,393.1 295.0,393.9 296.8,394.7 298.6,395.4 300.5,396.2 302.3,396.9 304.1,397.6 306.0,398.3 307.8,398.9 309.6,399.5 311.4,400.1 313.2,400.7 315.0,401.3 316.8,401.8 318.6,402.3 320.4,402.8 322.2,403.4 324.0,403.9 325.8,404.4 327.6,404.9 329.4,405.4 331.1,405.9 331.7,406.0 332.3,406.2 332.9,406.4 333.5,406.5 334.1,406.7 334.7,406.9 335.3,407.1 335.9,407.2 336.6,407.4 337.2,407.5 337.9,407.7 338.5,407.8 339.2,407.9 339.8,408.1 346.9,409.2 354.1,410.3 361.2,411.4 368.3,412.5 375.4,413.5 382.6,414.5 389.7,415.4 396.8,416.4 403.9,417.3 411.1,418.3 418.2,419.2 425.3,420.2 432.4,421.2 439.5,422.2 444.4,422.8 449.3,423.4 454.3,423.9 459.2,424.4 464.1,424.7 469.1,425.0 474.0,425.3 479.0,425.4 483.9,425.5 488.9,425.6 493.9,425.5 498.8,425.4 503.8,425.2 508.7,425.0 967.5,399.1 967.1,392.1 508.3,418.0 503.5,418.2 498.6,418.4 493.8,418.5 488.9,418.6 484.0,418.5 479.2,418.4 474.3,418.3 469.5,418.1 464.6,417.8 459.8,417.4 454.9,417.0 450.1,416.5 445.3,415.9 440.5,415.2 433.4,414.2 426.2,413.3 419.1,412.3 412.0,411.3 404.9,410.4 397.7,409.5 390.6,408.5 383.5,407.5 376.4,406.5 369.3,405.5 362.2,404.5 355.1,403.4 348.0,402.3 341.0,401.1 340.4,401.1 339.9,400.9 339.3,400.8 338.8,400.7 338.2,400.6 337.7,400.4 337.1,400.3 336.6,400.1 336.0,400.0 335.4,399.8 334.8,399.6 334.3,399.5 333.7,399.3 333.1,399.1 331.3,398.6 329.5,398.1 327.7,397.6 325.9,397.1 324.1,396.6 322.3,396.1 320.5,395.6 318.8,395.1 317.0,394.6 315.3,394.0 313.5,393.5 311.8,392.9 310.1,392.3 308.4,391.7 306.6,391.0 304.8,390.4 303.1,389.7 301.3,388.9 299.5,388.2 297.8,387.5 296.0,386.7 294.3,385.9 292.5,385.1 290.8,384.3 289.0,383.5 287.3,382.7 285.6,381.9 283.8,381.0 281.7,380.0 279.7,379.0 277.6,378.0 275.6,377.0 273.5,376.0 271.5,375.0 269.4,373.9 267.4,372.9 265.4,371.8 263.4,370.7 261.4,369.6 259.4,368.5 257.4,367.4 255.5,366.3" fill="#b7b7b7"/><polygon points="339.8,408.1 341.6,408.3 343.4,408.6 345.1,408.9 346.9,409.1 348.7,409.4 350.5,409.6 352.3,409.8 354.0,410.0 355.8,410.2 357.6,410.4 359.4,410.6 361.2,410.7 363.0,410.9 364.7,411.0 366.6,411.1 368.4,411.2 370.2,411.3 372.0,411.4 373.8,411.5 375.6,411.6 377.4,411.6 379.2,411.6 381.0,411.7 382.8,411.7 384.6,411.7 386.4,411.7 388.2,411.7 390.0,411.7 391.9,411.7 393.7,411.6 395.5,411.6 397.3,411.5 399.1,411.4 400.9,411.4 402.7,411.3 404.5,411.2 406.3,411.1 408.1,410.9 409.9,410.8 411.7,410.7 413.4,410.6 415.2,410.5 417.2,410.4 419.1,410.2 421.0,410.1 422.9,409.9 424.9,409.8 426.8,409.6 428.7,409.5 430.6,409.3 432.5,409.2 434.4,409.0 436.3,408.9 438.2,408.7 440.1,408.6 442.0,408.5 715.1,392.9 716.5,392.8 718.0,392.7 719.4,392.6 720.8,392.6 722.3,392.5 723.7,392.4 725.1,392.3 726.5,392.3 727.9,392.2 729.4,392.2 730.8,392.1 732.2,392.1 733.6,392.1 735.0,392.1 736.8,392.1 738.5,392.1 740.3,392.2 742.1,392.2 743.8,392.2 745.6,392.3 747.4,392.4 749.1,392.4 750.9,392.5 752.7,392.6 754.4,392.7 756.2,392.8 758.0,393.0 759.7,393.1 761.3,393.2 762.8,393.4 764.4,393.5 765.9,393.7 767.5,393.9 769.0,394.1 770.6,394.3 772.2,394.5 773.7,394.7 775.3,395.0 776.9,395.2 778.5,395.4 780.0,395.6 781.6,395.9 783.6,396.1 785.6,396.4 787.5,396.7 789.5,397.1 791.5,397.4 793.5,397.7 795.5,398.0 797.5,398.3 799.5,398.6 801.5,398.9 803.5,399.2 805.5,399.5 807.5,399.8 809.6,400.1 811.7,400.3 813.9,400.6 816.0,400.8 818.2,401.1 820.3,401.3 822.5,401.5 824.6,401.7 826.8,402.0 828.9,402.2 831.1,402.4 833.3,402.5 835.4,402.7 837.6,402.9 839.7,403.1 841.3,403.2 842.9,403.3 844.4,403.5 846.0,403.6 847.6,403.7 849.2,403.8 850.8,403.9 852.4,404.0 854.0,404.1 855.6,404.1 857.2,404.2 858.8,404.2 860.4,404.3 862.0,404.3 863.5,404.3 865.0,404.3 866.6,404.3 868.1,404.3 869.6,404.2 871.2,404.2 872.7,404.1 874.2,404.1 875.7,404.0 877.3,403.9 878.8,403.8 880.3,403.8 881.8,403.7 883.3,403.6 882.9,396.6 881.4,396.7 879.9,396.8 878.4,396.9 876.9,396.9 875.4,397.0 873.9,397.1 872.4,397.1 870.9,397.2 869.4,397.2 868.0,397.3 866.5,397.3 865.0,397.3 863.5,397.3 862.0,397.3 860.5,397.3 858.9,397.2 857.4,397.2 855.9,397.1 854.3,397.1 852.7,397.0 851.2,396.9 849.6,396.8 848.1,396.7 846.5,396.6 845.0,396.5 843.4,396.4 841.8,396.2 840.3,396.1 838.1,395.9 836.0,395.8 833.9,395.6 831.7,395.4 829.6,395.2 827.5,395.0 825.3,394.8 823.2,394.6 821.1,394.3 818.9,394.1 816.8,393.9 814.7,393.6 812.6,393.4 810.4,393.1 808.5,392.9 806.5,392.6 804.5,392.3 802.5,392.0 800.6,391.7 798.6,391.4 796.6,391.1 794.6,390.8 792.6,390.5 790.6,390.1 788.6,389.8 786.6,389.5 784.6,389.2 782.6,388.9 781.0,388.7 779.4,388.5 777.9,388.3 776.3,388.0 774.7,387.8 773.1,387.6 771.5,387.4 769.9,387.2 768.3,387.0 766.7,386.8 765.1,386.6 763.5,386.4 761.9,386.3 760.3,386.1 758.5,386.0 756.7,385.8 754.9,385.7 753.1,385.6 751.3,385.5 749.5,385.4 747.6,385.4 745.8,385.3 744.0,385.2 742.2,385.2 740.4,385.2 738.6,385.1 736.8,385.1 735.0,385.1 733.5,385.1 732.1,385.1 730.6,385.1 729.1,385.2 727.7,385.2 726.2,385.3 724.8,385.4 723.3,385.4 721.9,385.5 720.4,385.6 719.0,385.7 717.6,385.7 716.1,385.8 714.7,385.9 441.6,401.5 439.7,401.6 437.7,401.7 435.8,401.9 433.9,402.0 431.9,402.2 430.0,402.3 428.1,402.5 426.2,402.7 424.3,402.8 422.4,403.0 420.5,403.1 418.6,403.3 416.7,403.4 414.8,403.5 413.0,403.6 411.2,403.7 409.4,403.8 407.6,404.0 405.9,404.1 404.1,404.2 402.3,404.3 400.5,404.4 398.8,404.4 397.0,404.5 395.2,404.6 393.5,404.6 391.7,404.7 390.0,404.7 388.2,404.7 386.4,404.7 384.7,404.7 382.9,404.7 381.1,404.7 379.4,404.7 377.6,404.6 375.8,404.6 374.1,404.5 372.3,404.4 370.5,404.3 368.8,404.2 367.0,404.1 365.3,404.0 363.5,403.9 361.8,403.7 360.0,403.6 358.3,403.4 356.5,403.2 354.8,403.1 353.1,402.9 351.3,402.7 349.6,402.4 347.9,402.2 346.1,402.0 344.4,401.7 342.7,401.4 341.0,401.1" fill="#b7b7b7"/>
<path d="M81.3,210.7 L183.2,345.6 M86.9,206.5 L188.8,341.4" fill="none" stroke="#1c1c1c" stroke-width="1.1"/><path d="M81.3,210.7 L84.0,214.3 L86.8,217.8 L89.6,221.2 L92.5,224.6 L95.5,228.0 L98.5,231.3 L101.5,234.6 L104.5,237.9 L107.6,241.1 L110.7,244.4 L113.8,247.6 L116.9,250.7 L120.0,253.9 L123.1,257.1 L124.8,258.7 L126.5,260.3 L128.2,261.9 L129.9,263.5 L131.6,265.0 L133.4,266.5 L135.2,268.0 L137.0,269.5 L138.8,270.9 L140.6,272.4 L142.3,273.8 L144.1,275.2 L145.9,276.6 L147.7,278.1 L149.4,279.3 L151.0,280.5 L152.6,281.8 L154.3,283.0 L155.9,284.1 L157.6,285.3 L159.2,286.5 L160.9,287.6 L162.5,288.8 L164.2,289.9 L165.8,291.0 L167.4,292.2 L169.0,293.3 L170.6,294.5 L171.6,295.3 L172.6,296.0 L173.5,296.8 L174.5,297.6 L175.5,298.4 L176.5,299.3 L177.5,300.1 L178.5,300.9 L179.6,301.8 L180.6,302.6 L181.7,303.4 L182.9,304.2 L184.0,305.0 L185.2,305.7 L186.7,306.6 L188.2,307.4 L189.8,308.3 L191.3,309.1 L192.8,309.9 L194.4,310.6 L196.0,311.4 L197.5,312.1 L199.1,312.8 L200.7,313.5 L202.2,314.2 L203.8,314.8 L205.4,315.5 L207.0,316.1 L208.5,316.8 L210.1,317.4 L211.6,318.0 L213.2,318.5 L214.8,319.1 L216.4,319.6 L217.9,320.2 L219.5,320.7 L221.1,321.2 L222.7,321.7 L224.3,322.2 L225.9,322.7 L227.5,323.1 L229.1,323.6 L230.5,324.0 L232.0,324.4 L233.4,324.7 L234.9,325.1 L236.3,325.4 L237.8,325.8 L239.2,326.1 L240.7,326.4 L242.2,326.7 L243.6,327.0 L245.1,327.3 L246.6,327.5 L248.0,327.8 L249.5,328.1 L250.8,328.3 L252.1,328.5 L253.4,328.7 L254.7,328.9 L256.0,329.0 L257.3,329.2 L258.6,329.4 L259.9,329.5 L261.2,329.6 L262.6,329.8 L263.9,329.9 L265.2,330.0 L266.5,330.0 L267.9,330.1 L269.1,330.1 L270.4,330.2 L271.7,330.2 L273.0,330.2 L274.2,330.1 L275.5,330.1 L276.7,330.1 L278.0,330.0 L279.2,330.0 L280.5,329.9 L281.7,329.8 L283.0,329.7 L284.2,329.7 L285.4,329.6 L315.9,327.8 L346.4,326.1 L377.0,324.3 L407.5,322.6 L438.0,320.9 L468.5,319.2 L499.0,317.5 L529.6,315.9 L560.1,314.2 L590.6,312.5 L621.1,310.8 L651.7,309.0 L682.2,307.3 L712.7,305.5 M86.8,206.5 L89.5,209.9 L92.2,213.4 L95.0,216.7 L97.9,220.1 L100.7,223.4 L103.7,226.7 L106.6,229.9 L109.6,233.1 L112.7,236.3 L115.7,239.5 L118.8,242.7 L121.9,245.8 L125.0,249.0 L128.1,252.1 L129.7,253.7 L131.3,255.2 L132.9,256.8 L134.6,258.2 L136.2,259.7 L137.9,261.2 L139.7,262.6 L141.4,264.1 L143.2,265.5 L144.9,266.9 L146.7,268.3 L148.5,269.7 L150.3,271.1 L152.1,272.5 L153.6,273.8 L155.2,274.9 L156.8,276.1 L158.4,277.3 L160.0,278.4 L161.6,279.6 L163.2,280.7 L164.9,281.9 L166.5,283.0 L168.2,284.2 L169.8,285.3 L171.5,286.5 L173.1,287.7 L174.8,288.9 L175.9,289.7 L176.9,290.5 L178.0,291.4 L179.0,292.2 L180.0,293.0 L181.0,293.9 L182.0,294.7 L182.9,295.5 L183.9,296.3 L184.9,297.0 L185.8,297.7 L186.8,298.4 L187.8,299.1 L188.8,299.7 L190.2,300.5 L191.6,301.3 L193.1,302.1 L194.5,302.9 L196.0,303.6 L197.5,304.3 L198.9,305.0 L200.4,305.7 L202.0,306.4 L203.5,307.1 L205.0,307.7 L206.5,308.4 L208.1,309.0 L209.6,309.7 L211.1,310.3 L212.6,310.8 L214.1,311.4 L215.6,312.0 L217.1,312.5 L218.6,313.0 L220.2,313.5 L221.7,314.0 L223.2,314.5 L224.8,315.0 L226.3,315.5 L227.8,315.9 L229.4,316.4 L230.9,316.8 L232.3,317.2 L233.7,317.6 L235.1,317.9 L236.5,318.3 L237.9,318.6 L239.3,318.9 L240.7,319.2 L242.1,319.5 L243.6,319.8 L245.0,320.1 L246.4,320.4 L247.8,320.7 L249.3,320.9 L250.7,321.1 L251.9,321.4 L253.2,321.6 L254.4,321.7 L255.7,321.9 L256.9,322.1 L258.2,322.3 L259.4,322.4 L260.7,322.5 L261.9,322.7 L263.2,322.8 L264.4,322.9 L265.7,323.0 L266.9,323.0 L268.1,323.1 L269.3,323.1 L270.5,323.2 L271.7,323.2 L272.9,323.2 L274.1,323.1 L275.3,323.1 L276.5,323.1 L277.7,323.0 L278.9,323.0 L280.1,322.9 L281.3,322.8 L282.5,322.8 L283.8,322.7 L285.0,322.6 L315.5,320.8 L346.0,319.1 L376.6,317.3 L407.1,315.6 L437.6,313.9 L468.1,312.2 L498.7,310.6 L529.2,308.9 L559.7,307.2 L590.2,305.5 L620.7,303.8 L651.3,302.0 L681.8,300.3 L712.3,298.5" fill="none" stroke="#1c1c1c" stroke-width="1.1"/><path d="M81.3,210.7 L84.0,214.3 L86.8,217.8 L89.7,221.2 L92.6,224.6 L95.5,228.0 L98.5,231.3 L101.5,234.6 L104.5,237.9 L107.6,241.1 L110.7,244.3 L113.8,247.5 L116.9,250.7 L120.0,253.9 L123.1,257.1 L124.8,258.7 L126.5,260.3 L128.2,261.9 L129.9,263.5 L131.6,265.0 L133.4,266.5 L135.2,268.0 L136.9,269.5 L138.7,270.9 L140.5,272.4 L142.2,273.8 L144.0,275.3 L145.7,276.7 L147.4,278.2 L148.8,279.4 L150.2,280.5 L151.6,281.7 L153.0,282.9 L154.4,284.0 L155.9,285.2 L157.3,286.4 L158.7,287.5 L160.1,288.7 L161.5,289.8 L162.9,291.0 L164.3,292.2 L165.7,293.3 L167.0,294.5 L168.3,295.5 L169.5,296.6 L170.8,297.7 L172.0,298.8 L173.2,299.9 L174.5,301.0 L175.7,302.1 L177.0,303.2 L178.3,304.3 L179.6,305.4 L180.9,306.4 L182.2,307.5 L183.5,308.6 L184.9,309.6 L186.4,310.7 L187.9,311.8 L189.4,312.8 L191.0,313.9 L192.5,314.9 L194.1,315.9 L195.6,316.9 L197.2,317.9 L198.7,318.9 L200.3,319.9 L201.8,320.8 L203.4,321.8 L204.9,322.7 L206.5,323.7 L207.4,324.2 L208.3,324.8 L209.2,325.3 L210.1,325.8 L211.1,326.4 L212.0,326.9 L212.9,327.4 L213.8,327.9 L214.8,328.4 L215.7,328.8 L216.6,329.3 L217.6,329.8 L218.5,330.3 L219.4,330.7 L220.5,331.3 L221.6,331.8 L222.7,332.3 L223.7,332.9 L224.8,333.4 L225.9,333.9 L227.0,334.5 L228.1,335.0 L229.2,335.5 L230.4,336.0 L231.5,336.5 L232.6,337.0 L233.7,337.5 L234.9,338.0 L237.3,338.9 L239.8,339.7 L242.2,340.4 L244.7,341.1 L247.2,341.7 L249.7,342.2 L252.2,342.6 L254.7,343.0 L257.2,343.4 L259.7,343.8 L262.2,344.1 L264.6,344.4 L267.1,344.7 L269.5,345.1 L272.1,345.4 L274.6,345.8 L277.2,346.1 L279.8,346.4 L282.4,346.8 L285.0,347.0 L287.6,347.3 L290.3,347.5 L292.9,347.7 L295.6,347.8 L298.2,347.9 L300.9,348.0 L303.5,347.9 L306.2,347.8 L717.8,324.7 M86.8,206.5 L89.5,209.9 L92.2,213.4 L95.0,216.7 L97.9,220.1 L100.7,223.4 L103.7,226.6 L106.6,229.9 L109.6,233.1 L112.7,236.3 L115.7,239.5 L118.8,242.7 L121.9,245.8 L125.0,249.0 L128.1,252.1 L129.7,253.7 L131.3,255.2 L132.9,256.7 L134.5,258.2 L136.2,259.7 L137.9,261.2 L139.7,262.6 L141.4,264.1 L143.1,265.5 L144.9,267.0 L146.7,268.4 L148.4,269.9 L150.2,271.3 L152.0,272.8 L153.3,274.0 L154.7,275.2 L156.1,276.3 L157.5,277.5 L158.9,278.7 L160.3,279.8 L161.7,281.0 L163.1,282.1 L164.5,283.3 L165.9,284.4 L167.3,285.6 L168.7,286.8 L170.1,287.9 L171.6,289.1 L172.8,290.2 L174.1,291.3 L175.4,292.4 L176.6,293.5 L177.9,294.6 L179.1,295.7 L180.3,296.8 L181.6,297.9 L182.8,299.0 L184.1,300.0 L185.3,301.0 L186.6,302.0 L187.8,303.0 L189.1,304.0 L190.5,305.0 L192.0,306.1 L193.4,307.1 L194.9,308.1 L196.4,309.1 L197.9,310.1 L199.4,311.0 L200.9,312.0 L202.4,313.0 L204.0,313.9 L205.5,314.9 L207.0,315.8 L208.6,316.8 L210.1,317.7 L211.0,318.2 L211.8,318.7 L212.7,319.2 L213.6,319.7 L214.5,320.2 L215.3,320.7 L216.2,321.2 L217.1,321.7 L218.0,322.1 L218.9,322.6 L219.8,323.1 L220.7,323.5 L221.7,324.0 L222.6,324.5 L223.6,325.0 L224.7,325.5 L225.8,326.1 L226.8,326.6 L227.9,327.1 L229.0,327.6 L230.0,328.1 L231.1,328.6 L232.2,329.1 L233.2,329.6 L234.3,330.1 L235.4,330.6 L236.4,331.0 L237.5,331.4 L239.7,332.3 L241.9,333.0 L244.1,333.7 L246.4,334.3 L248.7,334.8 L251.1,335.3 L253.4,335.7 L255.8,336.1 L258.2,336.5 L260.7,336.8 L263.1,337.2 L265.6,337.5 L268.0,337.8 L270.5,338.1 L273.0,338.5 L275.6,338.8 L278.1,339.2 L280.7,339.5 L283.2,339.8 L285.8,340.1 L288.3,340.3 L290.8,340.6 L293.3,340.7 L295.8,340.9 L298.3,340.9 L300.8,341.0 L303.3,340.9 L305.8,340.8 L717.4,317.7" fill="none" stroke="#1c1c1c" stroke-width="1.1"/><path d="M235.0,338.0 L239.7,339.7 L244.3,341.3 L249.0,343.0 L253.7,344.6 L258.3,346.2 L263.0,347.8 L267.7,349.4 L272.4,351.0 L277.0,352.6 L281.7,354.1 L286.4,355.7 L291.0,357.3 L295.7,359.0 L300.3,360.6 L301.4,361.0 L302.4,361.3 L303.4,361.7 L304.5,362.1 L305.5,362.5 L306.5,362.9 L307.6,363.3 L308.6,363.7 L309.7,364.0 L310.7,364.4 L311.7,364.8 L312.8,365.2 L313.8,365.6 L314.9,366.0 L317.3,366.8 L319.7,367.7 L322.2,368.4 L324.6,369.2 L327.1,369.9 L329.5,370.5 L332.0,371.1 L334.5,371.7 L337.0,372.3 L339.5,372.8 L342.0,373.3 L344.5,373.7 L347.0,374.1 L349.5,374.5 L352.1,374.8 L354.7,375.1 L357.3,375.4 L359.8,375.6 L362.4,375.8 L365.0,375.9 L367.6,376.1 L370.2,376.1 L372.8,376.2 L375.4,376.2 L378.0,376.2 L380.6,376.1 L383.2,376.0 L385.8,375.9 L522.9,368.2 M237.4,331.4 L242.0,333.1 L246.7,334.7 L251.3,336.4 L256.0,338.0 L260.6,339.6 L265.3,341.2 L270.0,342.8 L274.6,344.3 L279.3,345.9 L284.0,347.5 L288.7,349.1 L293.3,350.7 L298.0,352.4 L302.7,354.0 L303.7,354.4 L304.8,354.8 L305.8,355.1 L306.9,355.5 L307.9,355.9 L309.0,356.3 L310.0,356.7 L311.1,357.1 L312.1,357.5 L313.2,357.9 L314.2,358.3 L315.2,358.7 L316.3,359.0 L317.3,359.4 L319.6,360.2 L321.9,361.0 L324.2,361.7 L326.6,362.4 L328.9,363.1 L331.3,363.7 L333.7,364.3 L336.0,364.9 L338.4,365.4 L340.8,365.9 L343.2,366.4 L345.6,366.8 L348.1,367.2 L350.5,367.5 L353.0,367.9 L355.4,368.2 L357.9,368.4 L360.4,368.6 L362.9,368.8 L365.4,369.0 L367.9,369.1 L370.4,369.1 L372.9,369.2 L375.4,369.2 L377.9,369.2 L380.4,369.1 L382.9,369.0 L385.4,368.9 L522.5,361.2" fill="none" stroke="#1c1c1c" stroke-width="1.1"/><path d="M142.6,292.2 L144.2,294.2 L145.9,296.2 L147.7,298.2 L149.4,300.2 L151.3,302.1 L153.1,303.9 L155.0,305.8 L156.8,307.6 L158.7,309.3 L160.6,311.1 L162.5,312.8 L164.4,314.6 L166.2,316.3 L168.1,318.1 L169.1,319.0 L170.1,319.8 L171.1,320.7 L172.1,321.6 L173.1,322.4 L174.1,323.2 L175.1,324.1 L176.2,324.9 L177.2,325.7 L178.2,326.5 L179.2,327.2 L180.2,328.0 L181.3,328.8 L182.3,329.6 L183.1,330.3 L184.0,330.9 L184.9,331.6 L185.8,332.3 L186.7,333.0 L187.6,333.7 L188.5,334.4 L189.5,335.1 L190.4,335.8 L191.3,336.4 L192.3,337.1 L193.3,337.7 L194.3,338.4 L195.3,339.0 L199.3,341.4 L203.3,343.9 L207.3,346.3 L211.3,348.8 L215.3,351.2 L219.3,353.7 L223.3,356.1 L227.4,358.5 L231.4,361.0 L235.5,363.3 L239.6,365.7 L243.7,368.0 L247.9,370.2 L252.1,372.4 L254.1,373.4 L256.2,374.4 L258.3,375.3 L260.4,376.1 L262.4,376.9 L264.5,377.7 L266.6,378.4 L268.7,379.1 L270.8,379.8 L272.9,380.5 L275.0,381.1 L277.1,381.8 L279.1,382.4 L281.2,383.1 L283.0,383.7 L284.7,384.3 L286.5,384.9 L288.3,385.4 L290.1,386.0 L291.9,386.6 L293.7,387.1 L295.5,387.6 L297.3,388.2 L299.1,388.7 L300.9,389.2 L302.7,389.6 L304.6,390.1 L306.4,390.5 L308.2,390.9 L310.0,391.3 L311.8,391.7 L313.6,392.0 L315.4,392.4 L317.2,392.7 L319.0,393.0 L320.8,393.3 L322.6,393.5 L324.5,393.8 L326.3,394.0 L328.1,394.3 L329.9,394.5 L331.7,394.7 L333.2,394.8 L334.6,395.0 L336.1,395.1 L337.5,395.2 L339.0,395.2 L340.4,395.3 L341.8,395.3 L343.3,395.4 L344.7,395.4 L346.2,395.4 L347.6,395.4 L349.0,395.4 L350.5,395.3 L351.9,395.3 L354.1,395.2 L356.4,395.1 L358.6,395.1 L360.8,395.0 L363.1,394.9 L365.3,394.9 L367.5,394.8 L369.8,394.7 L372.0,394.6 L374.2,394.5 L376.5,394.4 L378.7,394.3 L381.0,394.2 L383.2,394.1 L393.0,393.5 L402.8,393.0 L412.7,392.4 L422.5,391.8 L432.3,391.2 L442.1,390.6 L452.0,390.0 L461.8,389.5 L471.6,388.9 L481.4,388.3 L491.2,387.7 L501.1,387.1 L510.9,386.5 L520.7,386.0 M148.2,287.8 L149.7,289.8 L151.3,291.7 L152.9,293.6 L154.6,295.4 L156.3,297.2 L158.0,299.0 L159.8,300.7 L161.7,302.5 L163.5,304.2 L165.4,306.0 L167.2,307.7 L169.1,309.4 L171.0,311.2 L172.9,312.9 L173.8,313.8 L174.7,314.6 L175.6,315.4 L176.6,316.2 L177.5,317.0 L178.5,317.8 L179.5,318.6 L180.5,319.4 L181.5,320.1 L182.5,320.9 L183.5,321.7 L184.5,322.5 L185.5,323.2 L186.5,324.0 L187.4,324.7 L188.3,325.4 L189.2,326.1 L190.1,326.8 L191.0,327.5 L191.8,328.1 L192.7,328.8 L193.6,329.4 L194.5,330.1 L195.3,330.7 L196.2,331.3 L197.1,331.9 L198.0,332.4 L198.9,333.0 L202.9,335.4 L206.9,337.9 L211.0,340.3 L215.0,342.8 L218.9,345.3 L222.9,347.7 L226.9,350.1 L231.0,352.5 L235.0,354.9 L239.0,357.3 L243.0,359.6 L247.1,361.8 L251.2,364.0 L255.3,366.2 L257.2,367.1 L259.0,368.0 L261.0,368.8 L262.9,369.6 L264.9,370.3 L266.9,371.1 L268.9,371.8 L270.9,372.5 L273.0,373.1 L275.1,373.8 L277.1,374.5 L279.2,375.1 L281.3,375.8 L283.4,376.5 L285.2,377.1 L286.9,377.6 L288.7,378.2 L290.4,378.8 L292.2,379.3 L293.9,379.9 L295.7,380.4 L297.4,380.9 L299.2,381.4 L300.9,381.9 L302.7,382.4 L304.5,382.8 L306.2,383.3 L308.0,383.7 L309.7,384.1 L311.4,384.4 L313.2,384.8 L314.9,385.1 L316.7,385.5 L318.4,385.8 L320.2,386.1 L321.9,386.3 L323.7,386.6 L325.4,386.9 L327.2,387.1 L328.9,387.3 L330.7,387.5 L332.5,387.7 L333.8,387.9 L335.2,388.0 L336.6,388.1 L337.9,388.2 L339.3,388.2 L340.7,388.3 L342.0,388.3 L343.4,388.4 L344.8,388.4 L346.2,388.4 L347.5,388.4 L348.9,388.4 L350.3,388.3 L351.7,388.3 L353.9,388.2 L356.1,388.2 L358.4,388.1 L360.6,388.0 L362.8,387.9 L365.1,387.9 L367.3,387.8 L369.5,387.7 L371.7,387.6 L373.9,387.5 L376.2,387.4 L378.4,387.3 L380.6,387.2 L382.8,387.1 L392.6,386.6 L402.4,386.0 L412.3,385.4 L422.1,384.8 L431.9,384.2 L441.7,383.6 L451.5,383.1 L461.4,382.5 L471.2,381.9 L481.0,381.3 L490.8,380.7 L500.7,380.1 L510.5,379.6 L520.3,379.0" fill="none" stroke="#1c1c1c" stroke-width="1.1"/><path d="M251.9,372.3 L253.9,373.5 L256.0,374.6 L258.0,375.8 L260.1,376.9 L262.1,378.0 L264.2,379.1 L266.2,380.2 L268.3,381.2 L270.4,382.3 L272.5,383.3 L274.5,384.3 L276.6,385.3 L278.7,386.4 L280.8,387.4 L282.5,388.2 L284.3,389.0 L286.1,389.9 L287.9,390.7 L289.6,391.5 L291.4,392.3 L293.2,393.1 L295.0,393.9 L296.8,394.7 L298.6,395.4 L300.5,396.2 L302.3,396.9 L304.1,397.6 L306.0,398.3 L307.8,398.9 L309.6,399.5 L311.4,400.1 L313.2,400.7 L315.0,401.3 L316.8,401.8 L318.6,402.3 L320.4,402.8 L322.2,403.4 L324.0,403.9 L325.8,404.4 L327.6,404.9 L329.4,405.4 L331.1,405.9 L331.7,406.0 L332.3,406.2 L332.9,406.4 L333.5,406.5 L334.1,406.7 L334.7,406.9 L335.3,407.1 L335.9,407.2 L336.6,407.4 L337.2,407.5 L337.9,407.7 L338.5,407.8 L339.2,407.9 L339.8,408.1 L346.9,409.2 L354.1,410.3 L361.2,411.4 L368.3,412.5 L375.4,413.5 L382.6,414.5 L389.7,415.4 L396.8,416.4 L403.9,417.3 L411.1,418.3 L418.2,419.2 L425.3,420.2 L432.4,421.2 L439.5,422.2 L444.4,422.8 L449.3,423.4 L454.3,423.9 L459.2,424.4 L464.1,424.7 L469.1,425.0 L474.0,425.3 L479.0,425.4 L483.9,425.5 L488.9,425.6 L493.9,425.5 L498.8,425.4 L503.8,425.2 L508.7,425.0 L967.5,399.1 M255.5,366.3 L257.4,367.4 L259.4,368.5 L261.4,369.6 L263.4,370.7 L265.4,371.8 L267.4,372.9 L269.4,373.9 L271.5,375.0 L273.5,376.0 L275.6,377.0 L277.6,378.0 L279.7,379.0 L281.7,380.0 L283.8,381.0 L285.6,381.9 L287.3,382.7 L289.0,383.5 L290.8,384.3 L292.5,385.1 L294.3,385.9 L296.0,386.7 L297.8,387.5 L299.5,388.2 L301.3,388.9 L303.1,389.7 L304.8,390.4 L306.6,391.0 L308.4,391.7 L310.1,392.3 L311.8,392.9 L313.5,393.5 L315.3,394.0 L317.0,394.6 L318.8,395.1 L320.5,395.6 L322.3,396.1 L324.1,396.6 L325.9,397.1 L327.7,397.6 L329.5,398.1 L331.3,398.6 L333.1,399.1 L333.7,399.3 L334.3,399.5 L334.8,399.6 L335.4,399.8 L336.0,400.0 L336.6,400.1 L337.1,400.3 L337.7,400.4 L338.2,400.6 L338.8,400.7 L339.3,400.8 L339.9,400.9 L340.4,401.1 L341.0,401.1 L348.0,402.3 L355.1,403.4 L362.2,404.5 L369.3,405.5 L376.4,406.5 L383.5,407.5 L390.6,408.5 L397.7,409.5 L404.9,410.4 L412.0,411.3 L419.1,412.3 L426.2,413.3 L433.4,414.2 L440.5,415.2 L445.3,415.9 L450.1,416.5 L454.9,417.0 L459.8,417.4 L464.6,417.8 L469.5,418.1 L474.3,418.3 L479.2,418.4 L484.0,418.5 L488.9,418.6 L493.8,418.5 L498.6,418.4 L503.5,418.2 L508.3,418.0 L967.1,392.1" fill="none" stroke="#1c1c1c" stroke-width="1.1"/><path d="M339.8,408.1 L341.6,408.3 L343.4,408.6 L345.1,408.9 L346.9,409.1 L348.7,409.4 L350.5,409.6 L352.3,409.8 L354.0,410.0 L355.8,410.2 L357.6,410.4 L359.4,410.6 L361.2,410.7 L363.0,410.9 L364.7,411.0 L366.6,411.1 L368.4,411.2 L370.2,411.3 L372.0,411.4 L373.8,411.5 L375.6,411.6 L377.4,411.6 L379.2,411.6 L381.0,411.7 L382.8,411.7 L384.6,411.7 L386.4,411.7 L388.2,411.7 L390.0,411.7 L391.9,411.7 L393.7,411.6 L395.5,411.6 L397.3,411.5 L399.1,411.4 L400.9,411.4 L402.7,411.3 L404.5,411.2 L406.3,411.1 L408.1,410.9 L409.9,410.8 L411.7,410.7 L413.4,410.6 L415.2,410.5 L417.2,410.4 L419.1,410.2 L421.0,410.1 L422.9,409.9 L424.9,409.8 L426.8,409.6 L428.7,409.5 L430.6,409.3 L432.5,409.2 L434.4,409.0 L436.3,408.9 L438.2,408.7 L440.1,408.6 L442.0,408.5 L715.1,392.9 L716.5,392.8 L718.0,392.7 L719.4,392.6 L720.8,392.6 L722.3,392.5 L723.7,392.4 L725.1,392.3 L726.5,392.3 L727.9,392.2 L729.4,392.2 L730.8,392.1 L732.2,392.1 L733.6,392.1 L735.0,392.1 L736.8,392.1 L738.5,392.1 L740.3,392.2 L742.1,392.2 L743.8,392.2 L745.6,392.3 L747.4,392.4 L749.1,392.4 L750.9,392.5 L752.7,392.6 L754.4,392.7 L756.2,392.8 L758.0,393.0 L759.7,393.1 L761.3,393.2 L762.8,393.4 L764.4,393.5 L765.9,393.7 L767.5,393.9 L769.0,394.1 L770.6,394.3 L772.2,394.5 L773.7,394.7 L775.3,395.0 L776.9,395.2 L778.5,395.4 L780.0,395.6 L781.6,395.9 L783.6,396.1 L785.6,396.4 L787.5,396.7 L789.5,397.1 L791.5,397.4 L793.5,397.7 L795.5,398.0 L797.5,398.3 L799.5,398.6 L801.5,398.9 L803.5,399.2 L805.5,399.5 L807.5,399.8 L809.6,400.1 L811.7,400.3 L813.9,400.6 L816.0,400.8 L818.2,401.1 L820.3,401.3 L822.5,401.5 L824.6,401.7 L826.8,402.0 L828.9,402.2 L831.1,402.4 L833.3,402.5 L835.4,402.7 L837.6,402.9 L839.7,403.1 L841.3,403.2 L842.9,403.3 L844.4,403.5 L846.0,403.6 L847.6,403.7 L849.2,403.8 L850.8,403.9 L852.4,404.0 L854.0,404.1 L855.6,404.1 L857.2,404.2 L858.8,404.2 L860.4,404.3 L862.0,404.3 L863.5,404.3 L865.0,404.3 L866.6,404.3 L868.1,404.3 L869.6,404.2 L871.2,404.2 L872.7,404.1 L874.2,404.1 L875.7,404.0 L877.3,403.9 L878.8,403.8 L880.3,403.8 L881.8,403.7 L883.3,403.6 M341.0,401.1 L342.7,401.4 L344.4,401.7 L346.1,402.0 L347.9,402.2 L349.6,402.4 L351.3,402.7 L353.1,402.9 L354.8,403.1 L356.5,403.2 L358.3,403.4 L360.0,403.6 L361.8,403.7 L363.5,403.9 L365.3,404.0 L367.0,404.1 L368.8,404.2 L370.5,404.3 L372.3,404.4 L374.1,404.5 L375.8,404.6 L377.6,404.6 L379.4,404.7 L381.1,404.7 L382.9,404.7 L384.7,404.7 L386.4,404.7 L388.2,404.7 L390.0,404.7 L391.7,404.7 L393.5,404.6 L395.2,404.6 L397.0,404.5 L398.8,404.4 L400.5,404.4 L402.3,404.3 L404.1,404.2 L405.9,404.1 L407.6,404.0 L409.4,403.8 L411.2,403.7 L413.0,403.6 L414.8,403.5 L416.7,403.4 L418.6,403.3 L420.5,403.1 L422.4,403.0 L424.3,402.8 L426.2,402.7 L428.1,402.5 L430.0,402.3 L431.9,402.2 L433.9,402.0 L435.8,401.9 L437.7,401.7 L439.7,401.6 L441.6,401.5 L714.7,385.9 L716.1,385.8 L717.6,385.7 L719.0,385.7 L720.4,385.6 L721.9,385.5 L723.3,385.4 L724.8,385.4 L726.2,385.3 L727.7,385.2 L729.1,385.2 L730.6,385.1 L732.1,385.1 L733.5,385.1 L735.0,385.1 L736.8,385.1 L738.6,385.1 L740.4,385.2 L742.2,385.2 L744.0,385.2 L745.8,385.3 L747.6,385.4 L749.5,385.4 L751.3,385.5 L753.1,385.6 L754.9,385.7 L756.7,385.8 L758.5,386.0 L760.3,386.1 L761.9,386.3 L763.5,386.4 L765.1,386.6 L766.7,386.8 L768.3,387.0 L769.9,387.2 L771.5,387.4 L773.1,387.6 L774.7,387.8 L776.3,388.0 L777.9,388.3 L779.4,388.5 L781.0,388.7 L782.6,388.9 L784.6,389.2 L786.6,389.5 L788.6,389.8 L790.6,390.1 L792.6,390.5 L794.6,390.8 L796.6,391.1 L798.6,391.4 L800.6,391.7 L802.5,392.0 L804.5,392.3 L806.5,392.6 L808.5,392.9 L810.4,393.1 L812.6,393.4 L814.7,393.6 L816.8,393.9 L818.9,394.1 L821.1,394.3 L823.2,394.6 L825.3,394.8 L827.5,395.0 L829.6,395.2 L831.7,395.4 L833.9,395.6 L836.0,395.8 L838.1,395.9 L840.3,396.1 L841.8,396.2 L843.4,396.4 L845.0,396.5 L846.5,396.6 L848.1,396.7 L849.6,396.8 L851.2,396.9 L852.7,397.0 L854.3,397.1 L855.9,397.1 L857.4,397.2 L858.9,397.2 L860.5,397.3 L862.0,397.3 L863.5,397.3 L865.0,397.3 L866.5,397.3 L868.0,397.3 L869.4,397.2 L870.9,397.2 L872.4,397.1 L873.9,397.1 L875.4,397.0 L876.9,396.9 L878.4,396.9 L879.9,396.8 L881.4,396.7 L882.9,396.6" fill="none" stroke="#1c1c1c" stroke-width="1.1"/>
<polygon points="183.2,345.6 187.5,351.4 191.9,357.1 196.2,362.9 200.5,368.7 204.8,374.5 209.1,380.3 213.4,386.1 217.7,391.9 222.0,397.7 226.3,403.5 230.6,409.3 234.9,415.1 239.3,420.8 243.6,426.6 246.5,430.5 249.2,434.6 251.8,438.7 254.3,442.9 256.7,447.3 258.9,451.6 261.0,456.1 263.0,460.6 264.9,465.2 266.7,469.8 268.4,474.4 270.0,479.1 271.5,483.8 272.9,488.6 279.7,486.6 278.2,481.8 276.7,476.9 275.0,472.1 273.3,467.3 271.4,462.6 269.5,457.8 267.4,453.2 265.2,448.5 262.8,444.0 260.4,439.5 257.8,435.1 255.1,430.8 252.2,426.5 249.2,422.4 244.9,416.6 240.5,410.9 236.2,405.1 231.9,399.3 227.6,393.5 223.3,387.7 219.0,381.9 214.7,376.1 210.4,370.3 206.1,364.5 201.8,358.7 197.5,352.9 193.1,347.2 188.8,341.4" fill="#fb0207"/><polygon points="183.2,345.6 187.7,351.4 192.4,357.1 197.2,362.7 202.1,368.2 207.1,373.5 212.2,378.8 217.4,384.0 222.7,389.1 228.0,394.1 233.4,399.1 238.8,404.0 244.3,408.9 249.7,413.8 255.2,418.6 307.2,464.6 311.8,459.4 259.8,413.4 254.4,408.6 248.9,403.7 243.5,398.9 238.2,394.0 232.8,389.0 227.5,384.0 222.3,379.0 217.2,373.9 212.2,368.7 207.3,363.4 202.4,358.1 197.7,352.6 193.2,347.1 188.8,341.4" fill="#fb0207"/>
<path d="M183.2,345.6 L187.5,351.4 L191.9,357.1 L196.2,362.9 L200.5,368.7 L204.8,374.5 L209.1,380.3 L213.4,386.1 L217.7,391.9 L222.0,397.7 L226.3,403.5 L230.6,409.3 L234.9,415.1 L239.3,420.8 L243.6,426.6 L246.5,430.5 L249.2,434.6 L251.8,438.7 L254.3,442.9 L256.7,447.3 L258.9,451.6 L261.0,456.1 L263.0,460.6 L264.9,465.2 L266.7,469.8 L268.4,474.4 L270.0,479.1 L271.5,483.8 L272.9,488.6 M188.8,341.4 L193.1,347.2 L197.5,352.9 L201.8,358.7 L206.1,364.5 L210.4,370.3 L214.7,376.1 L219.0,381.9 L223.3,387.7 L227.6,393.5 L231.9,399.3 L236.2,405.1 L240.5,410.9 L244.9,416.6 L249.2,422.4 L252.2,426.5 L255.1,430.8 L257.8,435.1 L260.4,439.5 L262.8,444.0 L265.2,448.5 L267.4,453.2 L269.5,457.8 L271.4,462.6 L273.3,467.3 L275.0,472.1 L276.7,476.9 L278.2,481.8 L279.7,486.6" fill="none" stroke="#1c1c1c" stroke-width="1.1"/><path d="M183.2,345.6 L187.7,351.4 L192.4,357.1 L197.2,362.7 L202.1,368.2 L207.1,373.5 L212.2,378.8 L217.4,384.0 L222.7,389.1 L228.0,394.1 L233.4,399.1 L238.8,404.0 L244.3,408.9 L249.7,413.8 L255.2,418.6 L307.2,464.6 M188.8,341.4 L193.2,347.1 L197.7,352.6 L202.4,358.1 L207.3,363.4 L212.2,368.7 L217.2,373.9 L222.3,379.0 L227.5,384.0 L232.8,389.0 L238.2,394.0 L243.5,398.9 L248.9,403.7 L254.4,408.6 L259.8,413.4 L311.8,459.4" fill="none" stroke="#1c1c1c" stroke-width="1.1"/>
<polygon points="699.4,306.3 699.0,299.3 712.3,298.5 712.7,305.5" fill="#9c9c9c" stroke="#1c1c1c" stroke-width="0.9"/><path d="M699.5,307.4 L699.0,298.2" stroke="#111" stroke-width="1.9"/><polygon points="704.5,325.4 704.1,318.5 717.4,317.7 717.8,324.7" fill="#9c9c9c" stroke="#1c1c1c" stroke-width="0.9"/><path d="M704.6,326.5 L704.1,317.4" stroke="#111" stroke-width="1.9"/><polygon points="509.7,368.9 509.3,361.9 522.5,361.2 522.9,368.2" fill="#9c9c9c" stroke="#1c1c1c" stroke-width="0.9"/><path d="M509.8,370.0 L509.3,360.8" stroke="#111" stroke-width="1.9"/><polygon points="507.2,386.7 506.8,379.8 520.3,379.0 520.7,386.0" fill="#9c9c9c" stroke="#1c1c1c" stroke-width="0.9"/><path d="M507.3,387.8 L506.8,378.7" stroke="#111" stroke-width="1.9"/><polygon points="954.2,399.8 953.8,392.9 967.1,392.1 967.5,399.1" fill="#9c9c9c" stroke="#1c1c1c" stroke-width="0.9"/><path d="M954.3,400.9 L953.8,391.8" stroke="#111" stroke-width="1.9"/><polygon points="183.1,345.4 188.7,341.2 186.0,337.7" fill="#555"/><path d="M249.0,330.9 L251.2,318.3" stroke="#333" stroke-width="0.6"/><circle cx="250.1" cy="324.6" r="2.8" fill="#fff" stroke="#333" stroke-width="0.65"/><path d="M285.5,332.5 L284.9,319.7" stroke="#333" stroke-width="0.6"/><circle cx="285.2" cy="326.1" r="2.8" fill="#fff" stroke="#333" stroke-width="0.65"/><path d="M233.7,340.4 L238.9,328.8" stroke="#333" stroke-width="0.6"/><circle cx="236.3" cy="334.6" r="2.8" fill="#fff" stroke="#333" stroke-width="0.65"/><path d="M306.3,350.7 L305.7,337.9" stroke="#333" stroke-width="0.6"/><circle cx="306" cy="344.3" r="2.8" fill="#fff" stroke="#333" stroke-width="0.65"/><path d="M299.3,363.3 L303.7,351.3" stroke="#333" stroke-width="0.6"/><circle cx="301.5" cy="357.3" r="2.8" fill="#fff" stroke="#333" stroke-width="0.65"/><path d="M313.9,368.7 L318.3,356.7" stroke="#333" stroke-width="0.6"/><circle cx="316.1" cy="362.7" r="2.8" fill="#fff" stroke="#333" stroke-width="0.65"/><path d="M385.9,378.8 L385.3,366.0" stroke="#333" stroke-width="0.6"/><circle cx="385.6" cy="372.4" r="2.8" fill="#fff" stroke="#333" stroke-width="0.65"/><path d="M193.5,341.2 L200.5,330.4" stroke="#333" stroke-width="0.6"/><circle cx="197" cy="335.8" r="2.8" fill="#fff" stroke="#333" stroke-width="0.65"/><path d="M352.0,398.2 L351.6,385.4" stroke="#333" stroke-width="0.6"/><circle cx="351.8" cy="391.8" r="2.8" fill="#fff" stroke="#333" stroke-width="0.65"/><path d="M367.7,397.6 L367.1,384.8" stroke="#333" stroke-width="0.6"/><circle cx="367.4" cy="391.2" r="2.8" fill="#fff" stroke="#333" stroke-width="0.65"/><path d="M383.4,396.9 L382.8,384.1" stroke="#333" stroke-width="0.6"/><circle cx="383.1" cy="390.5" r="2.8" fill="#fff" stroke="#333" stroke-width="0.65"/><path d="M339.3,410.9 L341.5,398.3" stroke="#333" stroke-width="0.6"/><circle cx="340.4" cy="404.6" r="2.8" fill="#fff" stroke="#333" stroke-width="0.65"/><path d="M442.1,411.4 L441.5,398.6" stroke="#333" stroke-width="0.6"/><circle cx="441.8" cy="405" r="2.8" fill="#fff" stroke="#333" stroke-width="0.65"/><path d="M439.1,425.0 L440.9,412.4" stroke="#333" stroke-width="0.6"/><circle cx="440" cy="418.7" r="2.8" fill="#fff" stroke="#333" stroke-width="0.65"/><path d="M508.8,427.9 L508.2,415.1" stroke="#333" stroke-width="0.6"/><circle cx="508.5" cy="421.5" r="2.8" fill="#fff" stroke="#333" stroke-width="0.65"/><path d="M560.0,316.9 L559.4,304.1" stroke="#333" stroke-width="0.6"/><circle cx="559.7" cy="310.5" r="2.8" fill="#fff" stroke="#333" stroke-width="0.65"/><path d="M575.5,316.1 L574.9,303.3" stroke="#333" stroke-width="0.6"/><circle cx="575.2" cy="309.7" r="2.8" fill="#fff" stroke="#333" stroke-width="0.65"/><path d="M580.8,334.5 L580.2,321.7" stroke="#333" stroke-width="0.6"/><circle cx="580.5" cy="328.1" r="2.8" fill="#fff" stroke="#333" stroke-width="0.65"/><path d="M781.2,398.7 L783.0,386.1" stroke="#333" stroke-width="0.6"/><circle cx="782.1" cy="392.4" r="2.8" fill="#fff" stroke="#333" stroke-width="0.65"/><path d="M782.7,412.4 L782.1,399.6" stroke="#333" stroke-width="0.6"/><circle cx="782.4" cy="406" r="2.8" fill="#fff" stroke="#333" stroke-width="0.65"/><path d="M883.4,406.5 L882.8,393.7" stroke="#333" stroke-width="0.6"/><circle cx="883.1" cy="400.1" r="2.8" fill="#fff" stroke="#333" stroke-width="0.65"/><path d="M898.8,405.7 L898.2,392.9" stroke="#333" stroke-width="0.6"/><circle cx="898.5" cy="399.3" r="2.8" fill="#fff" stroke="#333" stroke-width="0.65"/><path d="M712.8,308.4 L712.2,295.6" stroke="#333" stroke-width="0.6"/><circle cx="712.5" cy="302" r="2.8" fill="#fff" stroke="#333" stroke-width="0.65"/><path d="M717.9,327.6 L717.3,314.8" stroke="#333" stroke-width="0.6"/><circle cx="717.6" cy="321.2" r="2.8" fill="#fff" stroke="#333" stroke-width="0.65"/><path d="M523.0,371.1 L522.4,358.3" stroke="#333" stroke-width="0.6"/><circle cx="522.7" cy="364.7" r="2.8" fill="#fff" stroke="#333" stroke-width="0.65"/><path d="M520.8,388.9 L520.2,376.1" stroke="#333" stroke-width="0.6"/><circle cx="520.5" cy="382.5" r="2.8" fill="#fff" stroke="#333" stroke-width="0.65"/><path d="M967.6,402.0 L967.0,389.2" stroke="#333" stroke-width="0.6"/><circle cx="967.3" cy="395.6" r="2.8" fill="#fff" stroke="#333" stroke-width="0.65"/><path d="M253.3,420.8 L261.7,411.2" stroke="#333" stroke-width="0.6"/><circle cx="257.5" cy="416" r="2.8" fill="#fff" stroke="#333" stroke-width="0.65"/><path d="M241.3,428.4 L251.5,420.6" stroke="#333" stroke-width="0.6"/><circle cx="246.4" cy="424.5" r="2.8" fill="#fff" stroke="#333" stroke-width="0.65"/><polygon points="249.5,370.9 254.3,373.7 257.9,367.7 253.1,364.9" fill="#adadad"/><path d="M248.5,372.7 L254.1,363.1" stroke="#222" stroke-width="0.55"/><path d="M253.3,375.5 L258.9,365.9" stroke="#222" stroke-width="0.55"/><polygon points="246.6,365.2 249.8,368.8 251.4,366.2" fill="none" stroke="#333" stroke-width="0.5"/><polygon points="260.8,373.4 256.0,372.4 257.6,369.8" fill="none" stroke="#333" stroke-width="0.5"/><polygon points="713.6,392.9 716.6,392.7 716.2,385.7 713.2,385.9" fill="#adadad"/><path d="M713.7,395.0 L713.1,383.8" stroke="#222" stroke-width="0.55"/><path d="M716.7,394.8 L716.1,383.6" stroke="#222" stroke-width="0.55"/><polygon points="708.0,389.7 712.7,390.9 712.5,387.9" fill="none" stroke="#333" stroke-width="0.5"/><polygon points="721.8,388.9 717.3,390.7 717.1,387.7" fill="none" stroke="#333" stroke-width="0.5"/><polygon points="80.4,203.8 85.7,207.3 82.4,209.9" fill="#f4f4f4" stroke="#333" stroke-width="0.55"/><path d="M88.5,205.2 L79.6,212.0" stroke="#222" stroke-width="0.7"/><polygon points="278.0,493.4 274.3,488.2 278.3,487.0" fill="#f4f4f4" stroke="#333" stroke-width="0.55"/><path d="M270.9,489.1 L281.7,486.1" stroke="#222" stroke-width="0.7"/><polygon points="314.0,466.0 308.1,463.6 310.9,460.4" fill="#f4f4f4" stroke="#333" stroke-width="0.55"/><path d="M305.8,466.2 L313.2,457.8" stroke="#222" stroke-width="0.7"/>
<polygon points="464.8,262.7 531.5,254.9 534.4,270.4 468.8,278.9" fill="#c0c0c0" stroke="#555" stroke-width="0.6"/><polygon points="559.2,350.8 731.2,340.4 735.5,373.5 563.2,381.5" fill="#c0c0c0" stroke="#555" stroke-width="0.6"/><polygon points="866.8,410.0 969.2,406.5 972.9,434.8 870.8,439.1" fill="#c0c0c0" stroke="#555" stroke-width="0.6"/><path d="M389.2,312 L690.4,295.3" stroke="#ff6a00" stroke-width="2"/><path d="M395.2,349.1 L694.4,332.4" stroke="#ff6a00" stroke-width="2"/>
<polygon points="38.4,283.4 825.8,201.4 826,209.2 38.4,291.4" fill="#00008b" fill-opacity="0.6"/><polygon points="38.4,291.3 834,208.5 916,209.2 38.4,303.3" fill="#000"/>
<g fill="none" stroke="#333" stroke-width="0.55"><circle cx="464.8" cy="262.7" r="4.3"/><circle cx="531.5" cy="254.9" r="4.3"/><circle cx="534.4" cy="270.4" r="4.3"/><circle cx="468.8" cy="278.9" r="4.3"/><circle cx="559.2" cy="350.8" r="4.3"/><circle cx="731.2" cy="340.4" r="4.3"/><circle cx="735.5" cy="373.5" r="4.3"/><circle cx="563.2" cy="381.5" r="4.3"/><circle cx="866.8" cy="410" r="4.3"/><circle cx="969.2" cy="406.5" r="4.3"/><circle cx="972.9" cy="434.8" r="4.3"/><circle cx="870.8" cy="439.1" r="4.3"/><circle cx="389.2" cy="312" r="4.3"/><circle cx="690.4" cy="295.3" r="4.3"/><circle cx="395.2" cy="349.1" r="4.3"/><circle cx="694.4" cy="332.4" r="4.3"/><circle cx="38.4" cy="287.2" r="4.3"/><circle cx="38.4" cy="291.2" r="4.3"/><circle cx="38.4" cy="303.6" r="4.3"/><circle cx="825.6" cy="205.2" r="4.3"/><circle cx="833.6" cy="208.4" r="4.3"/><circle cx="916" cy="209.2" r="4.3"/></g></svg>
<svg width="1000" height="563" viewBox="0 0 1000 563"><g transform="translate(1.05,2.0) scale(0.66875)"><rect x="0" y="0" width="16" height="16" rx="1.2" fill="#2f8fc7"/><path d="M2,1 L7,14 M4.6,0.6 L9.2,14" stroke="#e9f3fa" stroke-width="1.1" fill="none"/><path d="M2.4,3 L5.2,2 M3.2,5 L6,4 M4,7 L6.8,6 M4.8,9 L7.5,8 M5.6,11 L8.2,10 M6.3,13 L8.8,12" stroke="#e9f3fa" stroke-width="0.9"/><path d="M6.5,15 L15,4.5 M9,15.3 L15.3,8" stroke="#7a7f83" stroke-width="1.1" fill="none"/><path d="M8.2,12.5 L10.6,13.6 M10,10.3 L12.3,11.5 M11.8,8.1 L14,9.3 M13.5,6 L15.3,7" stroke="#7a7f83" stroke-width="0.9"/></g>
<path d="M8.2,19.8 h2.6 l2.2,2.2 v4.6 h-6 v-2.6" fill="#fff" stroke="#555" stroke-width="0.8"/><path d="M10.8,19.8 v2.2 h2.2" fill="none" stroke="#555" stroke-width="0.6"/><path d="M7,18.9 l0.7,1.6 l1.7,0.5 l-1.7,0.6 l-0.7,1.7 l-0.7,-1.7 l-1.7,-0.6 l1.7,-0.5z" fill="#f0b24a"/>
<path d="M20,20.2 h2.4 l0.8,1 h2 v5.4 h-5.2z" fill="#5a5a5a"/><path d="M21.6,23 h6.8 l-0.6,3.7 h-7.4z" fill="#f0b24a"/><circle cx="26.2" cy="21.3" r="2.2" fill="#2fa36b"/><circle cx="26.2" cy="21.3" r="1" fill="#e6f5ec"/>
<rect x="35.5" y="19.8" width="7" height="6.8" fill="#fbfbfb" stroke="#a4a4a4" stroke-width="0.9"/><rect x="37" y="20" width="4" height="2.5" fill="#dedede" stroke="#b5b5b5" stroke-width="0.4"/><rect x="37.4" y="24" width="3.2" height="2.4" fill="#a9a9a9"/>
<path d="M52.4,24 C53.6,20.4 59,20.2 57.7,26.2" fill="none" stroke="#2b64b0" stroke-width="1.8"/><path d="M49.9,21.7 L50.1,26.4 L54.8,25.9z" fill="#2b64b0"/>
<path d="M71,24 C69.8,20.4 64.4,20.2 65.7,26.2" fill="none" stroke="#9a9a9a" stroke-width="1.7"/><path d="M73.5,21.7 L73.3,26.4 L68.6,25.9z" fill="#9a9a9a"/>
<path d="M78.2,20.4 h6.2" stroke="#444" stroke-width="0.9"/><path d="M78.4,21.6 h5.8 l-2.9,3z" fill="#333"/>
<path d="M115.5,30.5 C118,27 121,25.6 126,25.2 C150,24 170,24.6 214,25" fill="none" stroke="#04e474" stroke-width="5" stroke-linecap="round" stroke-linejoin="round"/>
<path d="M116,30.8 C130,29 140,27.5 150,28.5 C160,30.5 172,32 183,29.8 C195,27.5 205,26.8 213,26.5" fill="none" stroke="#04e474" stroke-width="4.6" stroke-linecap="round" stroke-linejoin="round"/>
<path d="M140,26.5 C155,25.5 185,25.5 205,25.5" fill="none" stroke="#04e474" stroke-width="4.5" stroke-linecap="round"/>
<path d="M919.6,7.1 h6.2" stroke="#777" stroke-width="0.8"/>
<rect x="949.3" y="5.6" width="4.8" height="4.8" rx="0.8" fill="#fff" stroke="#333" stroke-width="0.8"/><path d="M950.8,5.4 v-0.9 h4.9 v4.9 h-1.2" fill="none" stroke="#333" stroke-width="0.8"/>
<path d="M980.2,4.2 l6.3,6.3 M986.5,4.2 l-6.3,6.3" stroke="#333" stroke-width="0.8"/>
<circle cx="992" cy="40.5" r="4.1" fill="#2b64b0"/>
<g fill="#aaaaaa"><path d="M13,55.2 L15.9,58.6 L22.3,70.8 L20.2,71.8 L13.5,59.6z"/><path d="M26.1,55.2 L23.2,58.6 L16.8,70.8 L18.9,71.8 L25.6,59.6z"/></g><g stroke="#aaaaaa" fill="none" stroke-width="1.6"><ellipse cx="15.2" cy="74.8" rx="2.5" ry="3.5" transform="rotate(18 15.2 74.8)"/><ellipse cx="23.9" cy="74.8" rx="2.5" ry="3.5" transform="rotate(-18 23.9 74.8)"/></g>
<path d="M37.4,56.6 h9.600000000000001 l3.2,3.2 v12.2 h-12.8z" fill="#fff" stroke="#c4c4c4" stroke-width="0.9"/><path d="M47.0,56.6 v3.2 h3.2" fill="none" stroke="#c4c4c4" stroke-width="0.7"/><path d="M39.4,61.2 h8.8" stroke="#c4c4c4" stroke-width="0.8"/><path d="M39.4,64.3 h8.8" stroke="#c4c4c4" stroke-width="0.8"/><path d="M39.4,67.3 h8.8" stroke="#c4c4c4" stroke-width="0.8"/><path d="M39.4,70.4 h8.8" stroke="#c4c4c4" stroke-width="0.8"/>
<path d="M46.6,63.2 h9.2 l3.2,3.2 v12.2 h-12.4z" fill="#fff" stroke="#b4b4b4" stroke-width="0.9"/><path d="M55.8,63.2 v3.2 h3.2" fill="none" stroke="#b4b4b4" stroke-width="0.7"/><path d="M48.6,67.8 h8.4" stroke="#b4b4b4" stroke-width="0.8"/><path d="M48.6,70.9 h8.4" stroke="#b4b4b4" stroke-width="0.8"/><path d="M48.6,73.9 h8.4" stroke="#b4b4b4" stroke-width="0.8"/><path d="M48.6,77.0 h8.4" stroke="#b4b4b4" stroke-width="0.8"/>
<rect x="65.6" y="57.4" width="17" height="18.4" rx="0.8" fill="#dedede"/><path d="M70.2,58.9 h7.8 l-1.1,-2.1 h-1.3 a1.5,1.5 0 0 0 -3,0 h-1.3z" fill="#b6b6b6"/><circle cx="74.1" cy="56.6" r="0.55" fill="#e6e6e6"/>
<path d="M75.6,64.6 h8.399999999999999 l3.2,3.2 v10.8 h-11.6z" fill="#fff" stroke="#b4b4b4" stroke-width="0.9"/><path d="M83.99999999999999,64.6 v3.2 h3.2" fill="none" stroke="#b4b4b4" stroke-width="0.7"/><path d="M77.6,69.2 h7.6" stroke="#b4b4b4" stroke-width="0.8"/><path d="M77.6,73.1 h7.6" stroke="#b4b4b4" stroke-width="0.8"/><path d="M77.6,77.0 h7.6" stroke="#b4b4b4" stroke-width="0.8"/>
<path d="M101,74.2 L107.2,69.0 H123.6 L116.8,74.2z" fill="#2f6db5" stroke="#fff" stroke-width="0.5" stroke-linejoin="round"/>
<path d="M101,69.2 L107.2,64.0 H123.6 L116.8,69.2z" fill="#2f6db5" stroke="#fff" stroke-width="0.5" stroke-linejoin="round"/>
<path d="M101,64.2 L107.2,59.0 H123.6 L116.8,64.2z" fill="#2f6db5" stroke="#fff" stroke-width="0.5" stroke-linejoin="round"/>
<rect x="136.9" y="56.5" width="21.8" height="21.8" rx="1.5" fill="#fff" stroke="#6b6b6b" stroke-width="1.3"/>
<path d="M138.7,76.7 V72 L143,67 L148.2,72.6 L149.4,70 L153.7,64.9 L157.3,69.2 V76.7z" fill="#2f6db5"/><path d="M147.2,69.8 L150.2,73.4" stroke="#fff" stroke-width="0.5"/>
<path d="M142,64.1 a1.9,1.9 0 0 1 0.4,-3.7 a2.9,2.9 0 0 1 5.4,-0.8 a2.3,2.3 0 0 1 1.4,4.5z" fill="#2f6db5"/>
<rect x="183.6" y="55.6" width="17" height="15.2" fill="#fff" stroke="#6f6f6f" stroke-width="0.9"/><rect x="183.15" y="55.15" width="17.9" height="3.1" fill="#46a37a"/>
<rect x="181" y="59.8" width="17" height="15.2" fill="#fff" stroke="#6f6f6f" stroke-width="0.9"/><rect x="180.55" y="59.349999999999994" width="17.9" height="3.1" fill="#46a37a"/>
<rect x="178.4" y="64" width="17" height="15" fill="#fff" stroke="#6f6f6f" stroke-width="0.9"/><rect x="177.95000000000002" y="63.55" width="17.9" height="3.1" fill="#46a37a"/>
<rect x="180.6" y="68.8" width="3.2" height="1.9" fill="#b9b9b9"/>
<rect x="185.1" y="68.8" width="3.2" height="1.9" fill="#b9b9b9"/>
<rect x="189.6" y="68.8" width="3.2" height="1.9" fill="#b9b9b9"/>
<rect x="180.6" y="72.0" width="3.2" height="1.9" fill="#b9b9b9"/>
<rect x="185.1" y="72.0" width="3.2" height="1.9" fill="#b9b9b9"/>
<rect x="189.6" y="72.0" width="3.2" height="1.9" fill="#b9b9b9"/>
<rect x="180.6" y="75.2" width="3.2" height="1.9" fill="#b9b9b9"/>
<rect x="185.1" y="75.2" width="3.2" height="1.9" fill="#b9b9b9"/>
<rect x="189.6" y="75.2" width="3.2" height="1.9" fill="#b9b9b9"/>
<rect x="220.2" y="56.9" width="7.4" height="7.4" fill="#fff" stroke="#b5b5b5" stroke-width="0.8"/>
<rect x="263.4" y="53.6" width="65" height="14.4" fill="#fff" stroke="#c4c4c4" stroke-width="0.8"/><path d="M321.2,59 h4.6 l-2.3,2.4z" fill="#666"/>
<rect x="332.4" y="56.4" width="23.4" height="21.8" fill="#fff" stroke="#777" stroke-width="1"/><rect x="331.9" y="55.9" width="24.4" height="2.9" fill="#2f6db5"/><path d="M332.4,65.6 h15.6 v12.6" fill="none" stroke="#777" stroke-width="1"/>
<path d="M349.4,66.4 l4.2,-4.2 M350.4,61.6 h3.6 v3.6" fill="none" stroke="#2f6db5" stroke-width="1.2"/>
<path d="M387.4,59.2 a5,5 0 0 1 6,4.4" fill="none" stroke="#2f6db5" stroke-width="1.3"/><path d="M385.4,59.4 l3.4,-2.6 l0.4,4.2z" fill="#2f6db5"/>
<path d="M378.2,69 a5.4,5.4 0 0 0 6.2,4.6" fill="none" stroke="#2f6db5" stroke-width="1.3"/><path d="M386.6,73.4 l-3.6,2.4 l-0.2,-4.4z" fill="#2f6db5"/>
<rect x="935.2" y="530.5" width="4.8" height="1.5" fill="#fff"/>
<rect x="943" y="530.6" width="46" height="1.1" fill="#8fa8d0"/>
<rect x="971" y="527.6" width="2" height="6.4" fill="#fff"/>
<path d="M992,531.2 h5.6 M994.8,528.4 v5.6" stroke="#fff" stroke-width="1.5"/>
<path d="M10.2,546.3 l4.4,-0.7 v4 h-4.4z M15.3,545.5 l5.6,-0.9 v5 h-5.6z M10.2,550.3 h4.4 v4 l-4.4,-0.7z M15.3,550.3 h5.6 v5 l-5.6,-0.9z" fill="#111"/>
<circle cx="46.4" cy="547.8" r="3.3" fill="none" stroke="#333" stroke-width="1"/><path d="M44,550.4 l-4.6,4.6" stroke="#333" stroke-width="1.1"/>
<rect x="267" y="546.6" width="5.6" height="6.4" fill="none" stroke="#333" stroke-width="1"/><path d="M265.2,545.4 h9 M265.2,554.2 h9" stroke="#333" stroke-width="0.9"/><path d="M275.6,546.8 v7.4" stroke="#333" stroke-width="1"/><rect x="275" y="545" width="1.2" height="1.2" fill="#333"/>
<circle cx="304" cy="549.8" r="7" fill="#e33b2e"/>
<path d="M304,549.8 L297.95,553.3 A7,7 0 0 0 304.2,556.8 L309.9,546.6 z" fill="#2ba24c"/>
<path d="M304,549.8 L310.06,546.3 A7,7 0 0 1 304.2,556.8 z" fill="#fbc116"/>
<path d="M297.94,546.3 A7,7 0 0 1 310.06,546.3 L304,546.3z" fill="#e33b2e"/>
<circle cx="304" cy="549.8" r="3.3" fill="#fff"/><circle cx="304" cy="549.8" r="2.6" fill="#3b82f0"/>
<path d="M329.2,545 q0,-1 1,-1 h4.2 l1,1.2 h7.6 q0.8,0 0.8,0.8 v8.4 h-14.6z" fill="#f5b400"/><path d="M329.2,546.8 h14.6 v7.8 h-14.6z" fill="#ffd75e"/><path d="M331.6,555.4 v-4.4 h9.6 v4.4 h-2.6 v-2.2 h-4.4 v2.2z" fill="#2d8fdd"/>
<path d="M363.4,546 v-1.4 a2,2 0 0 1 2,-2 h5.8 a2,2 0 0 1 2,2 v1.4" fill="none" stroke="#4fb3f0" stroke-width="1"/><path d="M360.8,545.6 h15 v9.6 q0,2 -2,2 h-11 q-2,0 -2,-2z" fill="#14509a"/>
<rect x="365.4" y="548.2" width="2.4" height="2.4" fill="#f25022"/><rect x="368.5" y="548.2" width="2.4" height="2.4" fill="#7fba00"/><rect x="365.4" y="551.3" width="2.4" height="2.4" fill="#00a4ef"/><rect x="368.5" y="551.3" width="2.4" height="2.4" fill="#ffb900"/>
<rect x="393.2" y="544" width="15.6" height="12" rx="1" fill="#dc3148"/><rect x="395.6" y="547.2" width="10.8" height="7" fill="#fbeef0"/><path d="M399.2,549 h3.6 v2 q0,1.4 -1.8,2 q-1.8,-0.6 -1.8,-2z" fill="#dc3148"/>
<circle cx="433.4" cy="550" r="4.1" fill="none" stroke="#f0632a" stroke-width="3.2"/><path d="M434.6,542.4 q-3.4,1.2 -4.2,3.8 l3,0.6z M432.2,557.8 q3.4,-1.2 4.2,-3.8 l-3,-0.6z" fill="#f0632a"/>
<g transform="translate(457.8,542.2) scale(0.975)"><rect x="0" y="0" width="16" height="16" rx="1.2" fill="#2f8fc7"/><path d="M2,1 L7,14 M4.6,0.6 L9.2,14" stroke="#e9f3fa" stroke-width="1.1" fill="none"/><path d="M2.4,3 L5.2,2 M3.2,5 L6,4 M4,7 L6.8,6 M4.8,9 L7.5,8 M5.6,11 L8.2,10 M6.3,13 L8.8,12" stroke="#e9f3fa" stroke-width="0.9"/><path d="M6.5,15 L15,4.5 M9,15.3 L15.3,8" stroke="#7a7f83" stroke-width="1.1" fill="none"/><path d="M8.2,12.5 L10.6,13.6 M10,10.3 L12.3,11.5 M11.8,8.1 L14,9.3 M13.5,6 L15.3,7" stroke="#7a7f83" stroke-width="0.9"/></g>
<path d="M730.4,546 q-2.6,4 -2.4,8 l2.4,3.2 l2.4,-3.2 q0.2,-4 -2.4,-8z" fill="#3da2f2"/><path d="M730.4,546 v-1.6 a1.2,1.2 0 0 1 2.4,0 v0.8" fill="none" stroke="#8a8a8a" stroke-width="0.7"/>
<path d="M804.2,552.2 l4.2,-4.2 l4.2,4.2" fill="none" stroke="#222" stroke-width="1"/>
<rect x="821.2" y="545.8" width="4.6" height="8.6" rx="1.2" fill="none" stroke="#222" stroke-width="0.9"/><path d="M826.2,548.6 l1.6,-0.8 v4.4 l-1.6,-0.8" fill="#222"/><path d="M822.4,547.6 h2.2 M822.4,552.6 h2.2" stroke="#222" stroke-width="0.6"/>
<rect x="835.6" y="547.4" width="9.2" height="5.4" rx="0.6" fill="#111"/><rect x="834.4" y="549" width="1.4" height="2.2" fill="#111"/><circle cx="835.6" cy="547.6" r="1.2" fill="none" stroke="#111" stroke-width="0.6"/>
<path d="M852.4,553.4 a2.4,2.4 0 0 1 0.2,-4.7 a3.4,3.4 0 0 1 6.4,-0.6 a2.6,2.6 0 0 1 0.8,5.2z" fill="#bdbdbd" stroke="#333" stroke-width="0.9"/><circle cx="857.6" cy="552.6" r="2.9" fill="#e81123"/><path d="M856.4,551.4 l2.4,2.4 M858.8,551.4 l-2.4,2.4" stroke="#fff" stroke-width="0.8"/>
<g fill="none" stroke="#555" stroke-width="0.9"><path d="M867.4,553 a8,8 0 0 1 7.8,-7"/><path d="M869.6,553.6 a5.6,5.6 0 0 1 5.4,-5"/><path d="M871.8,554 a3.4,3.4 0 0 1 3.2,-3"/></g><circle cx="874.4" cy="553.6" r="0.9" fill="#333"/>
<path d="M881.4,548.6 h1.8 l2.6,-2.4 v7.8 l-2.6,-2.4 h-1.8z" fill="none" stroke="#222" stroke-width="0.8"/><path d="M887.4,548.4 a2.2,2.2 0 0 1 0,3.4 M889,547 a4.2,4.2 0 0 1 0,6.2 M890.6,545.8 a6,6 0 0 1 0,8.6" fill="none" stroke="#444" stroke-width="0.7"/>
<path d="M973.8,545.2 h10 v7.4 h-6.4 l-1.6,1.8 v-1.8 h-2z" fill="#111"/><path d="M975.4,547.2 h6.8 M975.4,549 h6.8 M975.4,550.8 h6.8" stroke="#e1dddb" stroke-width="0.5"/><circle cx="983.5" cy="555" r="4.6" fill="#e1dddb" stroke="#555" stroke-width="0.6"/>
<path d="M997.6,537 v26" stroke="#a9a6a4" stroke-width="0.7"/></svg>
<div id="title-text">
<span class="t" style="left:14.50px;top:3.50px;font-size:8.2px;color:#303030;transform:scaleX(0.9408);">Barrack street exhibition layout - AnyRail (Trial version)</span>
</div>
<div id="tab-labels">
<span class="t" style="left:11.60px;top:37.90px;font-size:7.4px;color:#fff;transform:scaleX(0.8318);">FILE</span>
<span class="t" style="left:50.60px;top:37.90px;font-size:7.4px;color:#2b579a;transform:scaleX(0.9955);">HOME</span>
<span class="t" style="left:91.60px;top:37.90px;font-size:7.4px;color:#444;transform:scaleX(0.9904);">SHOW</span>
<span class="t" style="left:133.60px;top:37.90px;font-size:7.4px;color:#444;transform:scaleX(0.8740);">INSERT</span>
<span class="t" style="left:177.00px;top:37.90px;font-size:7.4px;color:#444;transform:scaleX(0.9180);">TRACK LIBRARIES</span>
<span class="t" style="left:256.00px;top:37.90px;font-size:7.4px;color:#444;transform:scaleX(0.9115);">OBJECT LIBRARIES</span>
<span class="t" style="left:338.60px;top:37.90px;font-size:7.4px;color:#444;transform:scaleX(0.8882);">USER OBJECTS</span>
<span class="t" style="left:408.00px;top:37.90px;font-size:7.4px;color:#444;transform:scaleX(0.9080);">SETTINGS</span>
</div>
<div id="ribbon-labels">
<span class="t" style="left:14.00px;top:80.70px;font-size:7.8px;color:#b0b0b0;transform:scaleX(0.9474);">Cut</span>
<span class="t" style="left:39.00px;top:80.70px;font-size:7.8px;color:#b0b0b0;transform:scaleX(0.9885);">Copy</span>
<span class="t" style="left:67.00px;top:80.70px;font-size:7.8px;color:#b0b0b0;transform:scaleX(0.9024);">Paste</span>
<span class="t" style="left:31.00px;top:99.70px;font-size:7.8px;color:#707070;transform:scaleX(1.0183);">Clipboard</span>
<span class="t" style="left:101.00px;top:80.70px;font-size:7.8px;color:#3a3a3a;transform:scaleX(0.9076);">Layers</span>
<span class="t" style="left:101.00px;top:99.70px;font-size:7.8px;color:#707070;transform:scaleX(0.9076);">Layers</span>
<span class="t" style="left:142.85px;top:80.70px;font-size:7.8px;color:#3a3a3a;transform:scaleX(0.9527);">3D</span>
<span class="t" style="left:139.35px;top:89.70px;font-size:7.8px;color:#3a3a3a;transform:scaleX(0.9841);">View</span>
<span class="t" style="left:139.35px;top:99.70px;font-size:7.8px;color:#707070;transform:scaleX(0.9841);">View</span>
<span class="t" style="left:171.50px;top:80.70px;font-size:7.8px;color:#3a3a3a;transform:scaleX(0.9564);">Open used</span>
<span class="t" style="left:176.05px;top:89.70px;font-size:7.8px;color:#3a3a3a;transform:scaleX(1.0070);">libraries</span>
<span class="t" style="left:175.25px;top:99.70px;font-size:7.8px;color:#707070;transform:scaleX(0.9862);">Libraries</span>
<span class="t" style="left:231.90px;top:57.70px;font-size:7.8px;color:#3a3a3a;transform:scaleX(0.9816);">Active</span>
<span class="t" style="left:225.00px;top:99.70px;font-size:7.8px;color:#707070;transform:scaleX(0.9306);">Search</span>
<span class="t" style="left:265.90px;top:57.70px;font-size:7.8px;color:#3a3a3a;transform:scaleX(0.8761);">1:6</span>
<span class="t" style="left:293.50px;top:99.70px;font-size:7.8px;color:#707070;transform:scaleX(0.9692);">View scale</span>
<span class="t" style="left:334.85px;top:80.70px;font-size:7.8px;color:#3a3a3a;transform:scaleX(1.0094);">Fit to</span>
<span class="t" style="left:330.00px;top:89.70px;font-size:7.8px;color:#3a3a3a;transform:scaleX(1.0475);">window</span>
<span class="t" style="left:368.50px;top:80.70px;font-size:7.8px;color:#3a3a3a;transform:scaleX(0.9519);">Languages</span>
<span class="t" style="left:370.00px;top:99.70px;font-size:7.8px;color:#707070;transform:scaleX(0.9797);">Language</span>
</div>
<div id="status-labels">
<span class="t" style="left:4.75px;top:527.65px;font-size:7.9px;color:#fff;transform:scaleX(0.9733);">cm</span>
<span class="t" style="left:27.00px;top:527.65px;font-size:7.9px;color:#fff;transform:scaleX(0.9749);">Outside work area</span>
<span class="t" style="left:208.50px;top:527.65px;font-size:7.9px;color:#fff;transform:scaleX(0.9013);">Layer 1</span>
<span class="t" style="left:253.50px;top:527.65px;font-size:7.9px;color:#fff;transform:scaleX(0.9152);">Ready</span>
<span class="t" style="left:914.00px;top:527.65px;font-size:7.9px;color:#fff;transform:scaleX(0.8650);">1:6</span>
</div>
<div id="taskbar-labels">
<span class="t" style="left:57.70px;top:544.90px;font-size:9.4px;color:#3c3c3c;transform:scaleX(1.0183);">Type here to search</span>
<span class="t" style="left:743.80px;top:546.50px;font-size:9.2px;color:#303030;transform:scaleX(0.9981);">Rain to stop</span>
<span class="t" style="left:898.75px;top:546.50px;font-size:8.2px;color:#222;transform:scaleX(0.8301);">ENG</span>
<span class="t" style="left:932.50px;top:539.95px;font-size:8.3px;color:#222;transform:scaleX(0.8281);">20:21</span>
<span class="t" style="left:922.20px;top:551.95px;font-size:8.3px;color:#222;transform:scaleX(0.9388);">30/05/2022</span>
<span class="t" style="left:981.90px;top:552.30px;font-size:6.6px;color:#222;transform:scaleX(0.9262);">3</span>
</div>
<span class="t" style="left:375.20px;top:54.80px;font-size:14.6px;color:#555;transform:scaleX(1.0063);">A</span>
<span class="t" style="left:385.6px;top:65.2px;font-size:13.5px;color:#4a4a4a;font-family:'Liberation Sans','Noto Sans CJK SC',sans-serif;font-weight:bold">文</span>
<span class="t" style="left:990.20px;top:37.20px;font-size:6.8px;color:#fff;transform:scaleX(0.9519);font-weight:bold;">?</span>
</body></html>
